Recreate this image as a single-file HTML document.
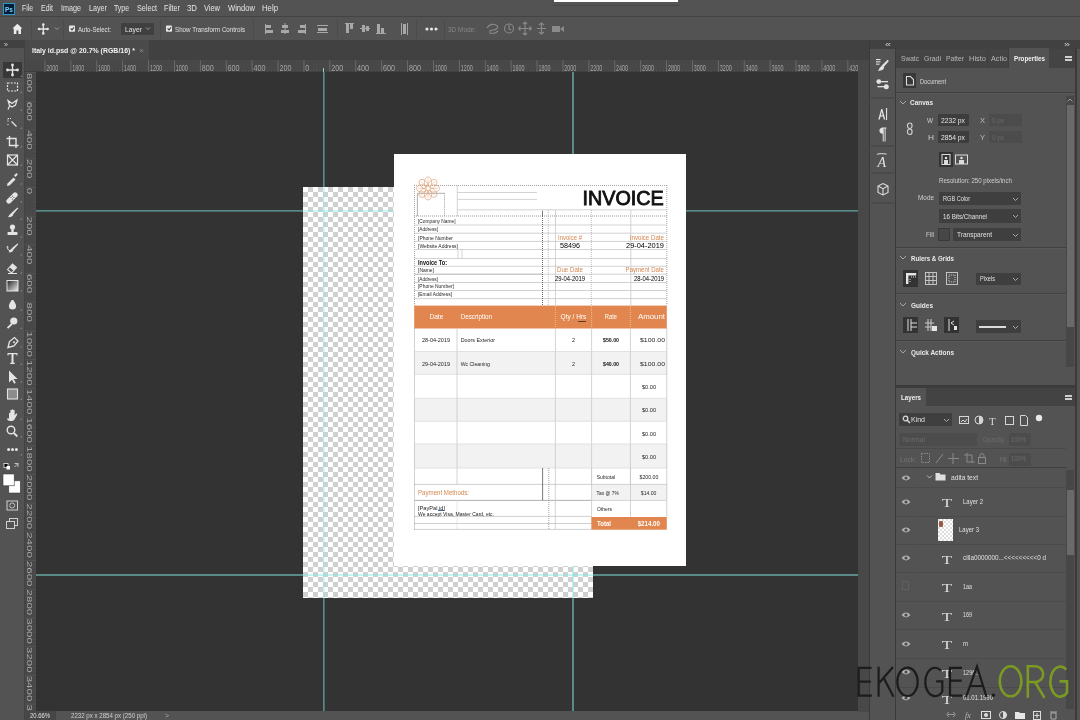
<!DOCTYPE html>
<html><head><meta charset="utf-8">
<style>
*{margin:0;padding:0;box-sizing:border-box}
html,body{width:1080px;height:720px;overflow:hidden;background:#535353;font-family:"Liberation Sans",sans-serif;color:#e6e6e6}
.a{position:absolute}
.t{position:absolute;white-space:nowrap;line-height:1;will-change:transform}
svg{will-change:transform}
</style></head><body>
<div class="a" style="left:0px;top:0px;width:1080px;height:16px;background:#535353;"></div>
<div class="a" style="left:0px;top:16px;width:1080px;height:1px;background:#444444;"></div>
<div class="a" style="left:0px;top:17px;width:1080px;height:23px;background:#535353;"></div>
<div class="a" style="left:3px;top:3px;width:12px;height:12px;background:#001e36;border:1px solid #2a9bd0"></div>
<div class="a" style="left:554px;top:0px;width:124px;height:1.5px;background:#ffffff;"></div>
<div class="a" style="left:553px;top:5px;width:127px;height:1px;background:#484848;"></div>
<div class="a" style="left:0px;top:40px;width:25px;height:8px;background:#414141;"></div>
<div class="a" style="left:0px;top:48px;width:25px;height:672px;background:#535353;"></div>
<div class="a" style="left:25px;top:40px;width:845px;height:20px;background:#414141;"></div>
<div class="a" style="left:25px;top:40px;width:124px;height:20px;background:#4a4a4a;"></div>
<div class="a" style="left:25px;top:60px;width:845px;height:12px;background:#484848;"></div>
<div class="a" style="left:25px;top:60px;width:11px;height:652px;background:#484848;"></div>
<div class="a" style="left:36px;top:72px;width:822px;height:639px;background:#333333;"></div>
<div class="a" style="left:25px;top:711px;width:845px;height:9px;background:#535353;"></div>
<div class="a" style="left:858px;top:72px;width:11px;height:640px;background:#484848;"></div>
<div class="a" style="left:869px;top:40px;width:1px;height:680px;background:#3a3a3a;"></div>
<div class="a" style="left:870px;top:40px;width:210px;height:9px;background:#414141;"></div>
<div class="a" style="left:895px;top:48px;width:1px;height:672px;background:#3a3a3a;"></div>
<div class="a" style="left:303px;top:187px;width:290px;height:411px;background:#ffffff;background-image:conic-gradient(#d0d0d0 25%,#ffffff 0 50%,#d0d0d0 0 75%,#ffffff 0);background-size:10px 10px;background-position:0 0"></div>
<div class="a" style="left:36px;top:210px;width:822px;height:1px;background:rgba(135,235,225,0.48);"></div>
<div class="a" style="left:36px;top:211px;width:822px;height:1px;background:rgba(120,245,240,0.3);"></div>
<div class="a" style="left:36px;top:574px;width:822px;height:2px;background:rgba(135,235,225,0.48);"></div>
<div class="a" style="left:323px;top:72px;width:1px;height:639px;background:rgba(135,235,225,0.48);"></div>
<div class="a" style="left:324px;top:72px;width:1px;height:639px;background:rgba(120,245,240,0.3);"></div>
<div class="a" style="left:572px;top:72px;width:2px;height:639px;background:rgba(135,235,225,0.48);"></div>
<div class="a" style="left:394px;top:154px;width:292px;height:412px;background:#ffffff;"></div>
<svg class="a" style="left:0;top:0" width="1080" height="720" viewBox="0 0 1080 720"><rect x="414.5" y="351.5" width="252.3" height="22.899999999999977" fill="#f2f2f2"/><rect x="414.5" y="398.3" width="252.3" height="22.94999999999999" fill="#f2f2f2"/><rect x="414.5" y="444" width="252.3" height="24" fill="#f2f2f2"/><rect x="591.6" y="484.4" width="75.2" height="16" fill="#f2f2f2"/><rect x="414.2" y="305.6" width="252.6" height="22.9" fill="#e1864f"/><rect x="591.3" y="517" width="75.5" height="12.7" fill="#e1864f"/><line x1="414" y1="185.5" x2="667" y2="185.5" stroke="#8c8c8c" stroke-width="0.8" stroke-dasharray="1 1"/><line x1="414.5" y1="185" x2="414.5" y2="305.6" stroke="#8c8c8c" stroke-width="0.8" stroke-dasharray="1 1"/><line x1="666.8" y1="185" x2="666.8" y2="305.6" stroke="#8c8c8c" stroke-width="0.8" stroke-dasharray="1 1"/><line x1="417.4" y1="193.3" x2="444.5" y2="193.3" stroke="#9a9a9a" stroke-width="0.8"/><line x1="417.4" y1="193.3" x2="417.4" y2="216" stroke="#9a9a9a" stroke-width="0.8"/><line x1="444.5" y1="193.3" x2="444.5" y2="216" stroke="#8c8c8c" stroke-width="0.8" stroke-dasharray="1 1"/><line x1="457.3" y1="185.5" x2="457.3" y2="216" stroke="#c8c8c8" stroke-width="0.8"/><line x1="457.3" y1="192.5" x2="537" y2="192.5" stroke="#c8c8c8" stroke-width="0.8"/><line x1="457.3" y1="199.4" x2="537" y2="199.4" stroke="#c8c8c8" stroke-width="0.8"/><line x1="457.3" y1="209.8" x2="667" y2="209.8" stroke="#c8c8c8" stroke-width="0.8"/><line x1="414" y1="216" x2="667" y2="216" stroke="#8c8c8c" stroke-width="0.9" stroke-dasharray="1 1"/><line x1="414.5" y1="225" x2="542.5" y2="225" stroke="#c8c8c8" stroke-width="0.8"/><line x1="414.5" y1="233.2" x2="542.5" y2="233.2" stroke="#8c8c8c" stroke-width="0.8" stroke-dasharray="1 1"/><line x1="414.5" y1="241.4" x2="542.5" y2="241.4" stroke="#8c8c8c" stroke-width="0.8" stroke-dasharray="1 1"/><line x1="414.5" y1="249.5" x2="542.5" y2="249.5" stroke="#c8c8c8" stroke-width="0.8"/><line x1="414.5" y1="258.5" x2="542.5" y2="258.5" stroke="#c8c8c8" stroke-width="0.8"/><line x1="414.5" y1="266.3" x2="542.5" y2="266.3" stroke="#c8c8c8" stroke-width="0.8"/><line x1="414.5" y1="274.2" x2="542.5" y2="274.2" stroke="#9a9a9a" stroke-width="0.8"/><line x1="414.5" y1="282.5" x2="542.5" y2="282.5" stroke="#8c8c8c" stroke-width="0.8" stroke-dasharray="1 1"/><line x1="414.5" y1="290.5" x2="542.5" y2="290.5" stroke="#8c8c8c" stroke-width="0.8" stroke-dasharray="1 1"/><line x1="414.5" y1="298.6" x2="542.5" y2="298.6" stroke="#8c8c8c" stroke-width="0.8" stroke-dasharray="1 1"/><line x1="542.5" y1="225" x2="666.8" y2="225" stroke="#c8c8c8" stroke-width="0.8"/><line x1="542.5" y1="233.2" x2="666.8" y2="233.2" stroke="#c8c8c8" stroke-width="0.8"/><line x1="542.5" y1="241.4" x2="666.8" y2="241.4" stroke="#8c8c8c" stroke-width="0.8" stroke-dasharray="1 1"/><line x1="542.5" y1="249.5" x2="666.8" y2="249.5" stroke="#c8c8c8" stroke-width="0.8"/><line x1="542.5" y1="258.5" x2="666.8" y2="258.5" stroke="#c8c8c8" stroke-width="0.8"/><line x1="542.5" y1="266.3" x2="666.8" y2="266.3" stroke="#c8c8c8" stroke-width="0.8"/><line x1="542.5" y1="274.2" x2="666.8" y2="274.2" stroke="#8c8c8c" stroke-width="0.8" stroke-dasharray="1 1"/><line x1="542.5" y1="282.5" x2="666.8" y2="282.5" stroke="#8c8c8c" stroke-width="0.8" stroke-dasharray="1 1"/><line x1="542.5" y1="290.5" x2="666.8" y2="290.5" stroke="#8c8c8c" stroke-width="0.8" stroke-dasharray="1 1"/><line x1="542.5" y1="298.6" x2="666.8" y2="298.6" stroke="#8c8c8c" stroke-width="0.8" stroke-dasharray="1 1"/><line x1="542.5" y1="210.7" x2="542.5" y2="216" stroke="#6a6a6a" stroke-width="0.9"/><line x1="542.5" y1="216" x2="542.5" y2="305.6" stroke="#6a6a6a" stroke-width="1" stroke-dasharray="1 1"/><line x1="548.3" y1="210" x2="548.3" y2="305.6" stroke="#b0b0b0" stroke-width="0.8" stroke-dasharray="1 1"/><line x1="555.5" y1="210" x2="555.5" y2="305.6" stroke="#c8c8c8" stroke-width="0.8"/><line x1="591.3" y1="210" x2="591.3" y2="305.6" stroke="#a8a8a8" stroke-width="0.8" stroke-dasharray="1 1"/><line x1="630.8" y1="210" x2="630.8" y2="305.6" stroke="#c8c8c8" stroke-width="0.8"/><line x1="458" y1="249.5" x2="458" y2="258.5" stroke="#c8c8c8" stroke-width="0.8"/><line x1="462" y1="249.5" x2="462" y2="258.5" stroke="#c8c8c8" stroke-width="0.8"/><line x1="555.4" y1="306" x2="555.4" y2="328" stroke="#f4c8a8" stroke-width="0.8" stroke-dasharray="1 1"/><line x1="591.6" y1="306" x2="591.6" y2="328" stroke="#f4c8a8" stroke-width="0.8" stroke-dasharray="1 1"/><line x1="630.4" y1="306" x2="630.4" y2="328" stroke="#f4c8a8" stroke-width="0.8" stroke-dasharray="1 1"/><line x1="457" y1="328.5" x2="457" y2="484.4" stroke="#c8c8c8" stroke-width="0.8"/><line x1="555.4" y1="328.5" x2="555.4" y2="484.4" stroke="#c8c8c8" stroke-width="0.8"/><line x1="591.6" y1="328.5" x2="591.6" y2="484.4" stroke="#c8c8c8" stroke-width="0.8"/><line x1="630.4" y1="328.5" x2="630.4" y2="484.4" stroke="#c8c8c8" stroke-width="0.8"/><line x1="414.5" y1="328.5" x2="414.5" y2="529.4" stroke="#8c8c8c" stroke-width="0.8" stroke-dasharray="1 1"/><line x1="666.8" y1="328.5" x2="666.8" y2="517" stroke="#8c8c8c" stroke-width="0.8" stroke-dasharray="1 1"/><line x1="414.5" y1="351.5" x2="666.8" y2="351.5" stroke="#dcdcdc" stroke-width="0.8"/><line x1="414.5" y1="374.4" x2="666.8" y2="374.4" stroke="#dcdcdc" stroke-width="0.8"/><line x1="414.5" y1="398.3" x2="666.8" y2="398.3" stroke="#dcdcdc" stroke-width="0.8"/><line x1="414.5" y1="421.25" x2="666.8" y2="421.25" stroke="#dcdcdc" stroke-width="0.8"/><line x1="414.5" y1="444" x2="666.8" y2="444" stroke="#dcdcdc" stroke-width="0.8"/><line x1="414.5" y1="468" x2="666.8" y2="468" stroke="#dcdcdc" stroke-width="0.8"/><line x1="414.5" y1="484.4" x2="591.6" y2="484.4" stroke="#8c8c8c" stroke-width="0.8" stroke-dasharray="1 1"/><line x1="591.6" y1="484.4" x2="666.8" y2="484.4" stroke="#c8c8c8" stroke-width="0.8"/><line x1="414.5" y1="500.4" x2="591.6" y2="500.4" stroke="#9a9a9a" stroke-width="0.8"/><line x1="591.6" y1="500.4" x2="666.8" y2="500.4" stroke="#c8c8c8" stroke-width="0.8"/><line x1="414.5" y1="516.4" x2="591.3" y2="516.4" stroke="#8c8c8c" stroke-width="0.8" stroke-dasharray="1 1"/><line x1="414.5" y1="523.5" x2="591.3" y2="523.5" stroke="#8c8c8c" stroke-width="0.8" stroke-dasharray="1 1"/><line x1="414.5" y1="529.4" x2="591.3" y2="529.4" stroke="#8c8c8c" stroke-width="0.8" stroke-dasharray="1 1"/><line x1="542.6" y1="468" x2="542.6" y2="500.4" stroke="#6a6a6a" stroke-width="0.9"/><line x1="548.8" y1="468" x2="548.8" y2="529.4" stroke="#8c8c8c" stroke-width="0.8" stroke-dasharray="1 1"/><line x1="555.3" y1="484.4" x2="555.3" y2="529.4" stroke="#c8c8c8" stroke-width="0.8"/><line x1="457" y1="500.4" x2="457" y2="529.4" stroke="#c8c8c8" stroke-width="0.8" stroke-dasharray="1 1"/><line x1="591.6" y1="468" x2="591.6" y2="517" stroke="#c8c8c8" stroke-width="0.8"/><line x1="630.5" y1="468" x2="630.5" y2="517" stroke="#c8c8c8" stroke-width="0.8"/><g transform="rotate(0 428 188.4)"><ellipse cx="428" cy="182.4" rx="3.6" ry="5.6" fill="none" stroke="#e0a882" stroke-width="0.7"/><ellipse cx="428" cy="194.4" rx="3.6" ry="5.6" fill="none" stroke="#e0a882" stroke-width="0.8"/><line x1="428" y1="178.4" x2="428" y2="198.4" stroke="#e0a882" stroke-width="0.5"/></g><g transform="rotate(45 428 188.4)"><ellipse cx="428" cy="182.4" rx="3.6" ry="5.6" fill="none" stroke="#e0a882" stroke-width="0.7"/><ellipse cx="428" cy="194.4" rx="3.6" ry="5.6" fill="none" stroke="#e0a882" stroke-width="0.8"/><line x1="428" y1="178.4" x2="428" y2="198.4" stroke="#e0a882" stroke-width="0.5"/></g><g transform="rotate(90 428 188.4)"><ellipse cx="428" cy="182.4" rx="3.6" ry="5.6" fill="none" stroke="#e0a882" stroke-width="0.7"/><ellipse cx="428" cy="194.4" rx="3.6" ry="5.6" fill="none" stroke="#e0a882" stroke-width="0.8"/><line x1="428" y1="178.4" x2="428" y2="198.4" stroke="#e0a882" stroke-width="0.5"/></g><g transform="rotate(135 428 188.4)"><ellipse cx="428" cy="182.4" rx="3.6" ry="5.6" fill="none" stroke="#e0a882" stroke-width="0.7"/><ellipse cx="428" cy="194.4" rx="3.6" ry="5.6" fill="none" stroke="#e0a882" stroke-width="0.8"/><line x1="428" y1="178.4" x2="428" y2="198.4" stroke="#e0a882" stroke-width="0.5"/></g><circle cx="428" cy="188.4" r="2.3" fill="#fff" stroke="#e0a882" stroke-width="0.8"/></svg>
<div class="a" style="left:438px;top:510px;width:6px;height:1px;background:#4060a0;"></div>
<div class="a" style="left:578px;top:320.5px;width:8px;height:1px;background:#5a3a2a;"></div>
<!-- icon column -->
<div class="a" style="left:870px;top:49px;width:25px;height:671px;background:#535353"></div>
<div class="a" style="left:871px;top:97px;width:23px;height:2px;background:#4a4a4a"></div>
<div class="a" style="left:871px;top:145px;width:23px;height:2px;background:#4a4a4a"></div>
<div class="a" style="left:871px;top:172px;width:23px;height:2px;background:#4a4a4a"></div>
<div class="a" style="left:871px;top:202px;width:23px;height:2px;background:#4a4a4a"></div>
<svg class="a" style="left:870px;top:49px" width="25" height="155" viewBox="870 49 25 155">
 <g fill="#e2e2e2">
  <rect x="876" y="59" width="4.5" height="1.1"/><rect x="876" y="61.3" width="4.5" height="1.1"/><rect x="876" y="63.6" width="3.5" height="1.1"/>
  <path d="M887.6 59.8l1.3 1.3-5.4 6.2-1.8-1.8z"/>
  <path d="M881.2 66.3c1.2-1.2 2.9-.4 2.9 1 0 2.4-3 3.7-6 3.6 1-1 .9-3 3.1-4.6z"/>
  <circle cx="878.8" cy="81.6" r="2.4"/><rect x="881" y="81" width="7" height="1.3"/>
  <rect x="877.5" y="86" width="6.5" height="1.3"/><circle cx="886.3" cy="86.7" r="2.5"/>
  <path d="M878.3 119.5l2.9-10.5h1.2l2.9 10.5h-1.5l-.8-3h-2.4l-.8 3zm2.6-4.3h1.8l-.9-3.6z"/>
  <rect x="886" y="108" width="1.1" height="12"/>
  <path d="M882.3 127.5h4.2v1.1h-.9v12.8h-1v-12.8h-.9v12.8h-1v-7.6c-1.9 0-3.3-1.3-3.3-3.1s1.4-3.2 3.3-3.2z"/>
  <text x="877.5" y="166.5" font-family="Liberation Serif" font-style="italic" font-size="14" fill="#e2e2e2">A</text><path d="M877 154.3c2-.8 6-.8 9.5-.2" stroke="#e2e2e2" stroke-width="1" fill="none"/>
 </g>
 <g fill="none" stroke="#dcdcdc" stroke-width="1.1">
  <path d="M883 183.5l5 2.6v6.3l-5 2.6-5-2.6v-6.3z M878 186.1l5 2.6 5-2.6 M883 188.7v6.3"/>
 </g>
</svg>

<div class="a" style="left:896px;top:49px;width:179px;height:19px;background:#444444;"></div>
<div class="a" style="left:1009px;top:48px;width:40px;height:21px;background:#535353;"></div>
<div class="a" style="left:987px;top:50px;width:1px;height:17px;background:#3e3e3e;"></div>
<div class="a" style="left:1008px;top:48px;width:1px;height:20px;background:#3e3e3e;"></div>
<div class="a" style="left:1065px;top:56px;width:7px;height:2px;background:#cfcfcf;"></div>
<div class="a" style="left:1065px;top:59px;width:7px;height:2px;background:#cfcfcf;"></div>
<div class="a" style="left:1075px;top:48px;width:2px;height:672px;background:#3a3a3a;"></div>
<div class="a" style="left:903px;top:73px;width:13px;height:15px;background:#383838;"></div>
<svg class="a" style="left:905px;top:75px" width="10" height="11"><path d="M1.5 1.5h4l3 3v5.5h-7z" fill="none" stroke="#dcdcdc" stroke-width="1.1"/></svg>
<div class="a" style="left:896px;top:92px;width:179px;height:1px;background:#404040;"></div>
<div class="a" style="left:896px;top:93px;width:179px;height:1px;background:#5a5a5a;"></div>
<div class="a" style="left:1066px;top:96px;width:8px;height:271px;background:#474747;"></div>
<div class="a" style="left:1067px;top:105px;width:7px;height:222px;background:#6a6a6a;"></div>
<svg class="a" style="left:1066px;top:97px" width="8" height="6"><path d="M1.5 4.5l2.5-2.5 2.5 2.5" fill="none" stroke="#999" stroke-width="1"/></svg>
<svg class="a" style="left:899px;top:99px" width="8" height="7"><path d="M1 2l3 3 3-3" fill="none" stroke="#a8a8a8" stroke-width="1"/></svg>
<div class="a" style="left:938px;top:114px;width:31px;height:12px;background:#3d3d3d;"></div>
<div class="a" style="left:989px;top:114px;width:33px;height:12px;background:#4c4c4c;"></div>
<div class="a" style="left:938px;top:131px;width:31px;height:12px;background:#3d3d3d;"></div>
<div class="a" style="left:989px;top:131px;width:33px;height:12px;background:#4c4c4c;"></div>
<svg class="a" style="left:906px;top:122px" width="8" height="14"><g fill="none" stroke="#cfcfcf" stroke-width="1.2"><rect x="1.5" y="1" width="4.5" height="5.5" rx="2.2"/><rect x="1.5" y="7" width="4.5" height="5.5" rx="2.2"/></g></svg>
<div class="a" style="left:939px;top:152px;width:14px;height:15px;background:#333333;"></div>
<svg class="a" style="left:941px;top:154px" width="10" height="11"><rect x="1" y="0.5" width="8" height="10" fill="none" stroke="#ddd"/><circle cx="5" cy="4" r="1.3" fill="#ddd"/><rect x="3" y="6" width="4" height="4" fill="#ddd"/></svg>
<svg class="a" style="left:955px;top:154px" width="13" height="11"><rect x="0.5" y="1" width="12" height="9" fill="none" stroke="#ddd"/><circle cx="6.5" cy="4" r="1.3" fill="#ddd"/><rect x="4" y="6" width="5" height="4" fill="#ddd"/></svg>
<div class="a" style="left:939px;top:192px;width:82px;height:13px;background:#3f3f3f;"></div>
<div class="a" style="left:939px;top:209px;width:82px;height:14px;background:#3f3f3f;"></div>
<div class="a" style="left:938px;top:228px;width:12px;height:13px;background:#474747;border:1px solid #3a3a3a"></div>
<div class="a" style="left:953px;top:228px;width:68px;height:13px;background:#3f3f3f;"></div>
<svg class="a" style="left:1012px;top:196px" width="7" height="6"><path d="M1 2l2.5 2.5 2.5-2.5" fill="none" stroke="#a8a8a8" stroke-width="1"/></svg>
<svg class="a" style="left:1012px;top:213px" width="7" height="6"><path d="M1 2l2.5 2.5 2.5-2.5" fill="none" stroke="#a8a8a8" stroke-width="1"/></svg>
<svg class="a" style="left:1012px;top:232px" width="7" height="6"><path d="M1 2l2.5 2.5 2.5-2.5" fill="none" stroke="#a8a8a8" stroke-width="1"/></svg>
<div class="a" style="left:896px;top:247px;width:170px;height:1px;background:#404040;"></div>
<div class="a" style="left:896px;top:248px;width:170px;height:1px;background:#5a5a5a;"></div>
<svg class="a" style="left:899px;top:254px" width="8" height="7"><path d="M1 2l3 3 3-3" fill="none" stroke="#a8a8a8" stroke-width="1"/></svg>
<div class="a" style="left:903px;top:270px;width:15px;height:17px;background:#333333;"></div>
<svg class="a" style="left:905px;top:272px" width="12" height="13"><path d="M2.2 12V2.2h9" fill="none" stroke="#e6e6e6" stroke-width="2.4"/><path d="M6 5h1M8 5h1M10 5h1M5 7v1M5 9v1" stroke="#d0d0d0"/></svg>
<svg class="a" style="left:925px;top:272px" width="12" height="13"><g fill="none" stroke="#cfcfcf" stroke-width="0.9"><rect x="0.5" y="0.5" width="11" height="12"/><path d="M4 0.5v12M8 0.5v12M0.5 4.5h11M0.5 8.5h11"/></g></svg>
<svg class="a" style="left:946px;top:272px" width="12" height="13"><g fill="none" stroke="#cfcfcf" stroke-width="0.9"><rect x="0.5" y="0.5" width="11" height="12"/><rect x="3" y="3" width="6" height="7" stroke-dasharray="1 1"/></g></svg>
<div class="a" style="left:976px;top:273px;width:45px;height:12px;background:#3f3f3f;"></div>
<svg class="a" style="left:1012px;top:276px" width="7" height="6"><path d="M1 2l2.5 2.5 2.5-2.5" fill="none" stroke="#a8a8a8" stroke-width="1"/></svg>
<div class="a" style="left:896px;top:293px;width:170px;height:1px;background:#404040;"></div>
<div class="a" style="left:896px;top:294px;width:170px;height:1px;background:#5a5a5a;"></div>
<svg class="a" style="left:899px;top:301px" width="8" height="7"><path d="M1 2l3 3 3-3" fill="none" stroke="#a8a8a8" stroke-width="1"/></svg>
<div class="a" style="left:903px;top:317px;width:15px;height:16px;background:#333333;"></div>
<svg class="a" style="left:905px;top:319px" width="12" height="12"><g stroke="#e0e0e0" stroke-width="1"><path d="M3 0v12M6 0v12M6 4h6M6 8h6"/></g></svg>
<svg class="a" style="left:925px;top:319px" width="13" height="12"><g stroke="#cfcfcf" stroke-width="1"><path d="M3 0v12M6 0v12M0 4h9M0 8h6"/></g><rect x="7" y="7" width="5" height="5" fill="#e6e6e6"/></svg>
<div class="a" style="left:944px;top:317px;width:15px;height:16px;background:#333333;"></div>
<svg class="a" style="left:946px;top:319px" width="12" height="12"><g stroke="#e0e0e0" stroke-width="1" fill="none"><path d="M3 0v12M5 4l3-2M5 4l3 2"/></g><rect x="8" y="7" width="3" height="4" fill="#e6e6e6"/></svg>
<div class="a" style="left:976px;top:320px;width:45px;height:13px;background:#3f3f3f;"></div>
<div class="a" style="left:979px;top:326px;width:27px;height:1.5px;background:#dadada;"></div>
<svg class="a" style="left:1012px;top:324px" width="7" height="6"><path d="M1 2l2.5 2.5 2.5-2.5" fill="none" stroke="#a8a8a8" stroke-width="1"/></svg>
<div class="a" style="left:896px;top:340px;width:170px;height:1px;background:#404040;"></div>
<div class="a" style="left:896px;top:341px;width:170px;height:1px;background:#5a5a5a;"></div>
<svg class="a" style="left:899px;top:348px" width="8" height="7"><path d="M1 2l3 3 3-3" fill="none" stroke="#a8a8a8" stroke-width="1"/></svg>
<div class="a" style="left:896px;top:385px;width:179px;height:3px;background:#3c3c3c;"></div>
<div class="a" style="left:896px;top:388px;width:179px;height:18px;background:#434343;"></div>
<div class="a" style="left:896px;top:388px;width:30px;height:19px;background:#535353;"></div>
<div class="a" style="left:1065px;top:395px;width:7px;height:2px;background:#cfcfcf;"></div>
<div class="a" style="left:1065px;top:398px;width:7px;height:2px;background:#cfcfcf;"></div>
<div class="a" style="left:899px;top:413px;width:53px;height:13px;background:#3f3f3f;"></div>
<svg class="a" style="left:902px;top:415px" width="9" height="9"><circle cx="3.5" cy="3.5" r="2.3" fill="none" stroke="#ddd" stroke-width="1.2"/><path d="M5 5l3 3" stroke="#ddd" stroke-width="1.4"/></svg>
<svg class="a" style="left:943px;top:417px" width="7" height="6"><path d="M1 2l2.5 2.5 2.5-2.5" fill="none" stroke="#a8a8a8" stroke-width="1"/></svg>
<svg class="a" style="left:958px;top:413px" width="86" height="14">
 <g fill="none" stroke="#d6d6d6" stroke-width="1">
  <rect x="1.5" y="3.5" width="9" height="7"/>
  <circle cx="21" cy="7" r="4"/>
  <rect x="47.5" y="3.5" width="8" height="8"/>
  <path d="M62.5 2.5h5l2 2v8h-7z"/>
 </g>
 <path d="M3 9l2-2 2 2 2-3" stroke="#d6d6d6" fill="none"/>
 <path d="M21 3a4 4 0 0 1 0 8z" fill="#d6d6d6"/>
 <text x="31" y="12" font-family="Liberation Serif" font-size="11" fill="#d6d6d6">T</text>
 <circle cx="81" cy="5" r="3.2" fill="#e8e8e8"/>
</svg>
<div class="a" style="left:899px;top:433px;width:78px;height:13px;background:#4c4c4c;"></div>
<div class="a" style="left:1009px;top:433px;width:22px;height:13px;background:#4c4c4c;"></div>
<div class="a" style="left:896px;top:448px;width:170px;height:1px;background:#4a4a4a;"></div>
<svg class="a" style="left:920px;top:452px" width="70" height="13"><g fill="none" stroke="#8a8a8a" stroke-width="1"><rect x="1.5" y="1.5" width="8" height="9" stroke-dasharray="1.5 1"/><path d="M16 11l7-9"/><path d="M33 1v11M28 6.5h11"/><path d="M44 3h8v8M47 1v9h8"/><rect x="58.5" y="5.5" width="7" height="6"/><path d="M60 5.5v-2a2 2 0 0 1 4 0v2"/></g></svg>
<div class="a" style="left:1009px;top:453px;width:22px;height:13px;background:#4c4c4c;"></div>
<div class="a" style="left:896px;top:467px;width:170px;height:1px;background:#404040;"></div>
<div class="a" style="left:914px;top:468px;width:1px;height:241px;background:#515151;"></div>
<div class="a" style="left:1066px;top:470px;width:8px;height:239px;background:#474747;"></div>
<div class="a" style="left:1067px;top:490px;width:7px;height:65px;background:#6a6a6a;"></div>
<div class="a" style="left:896px;top:487px;width:170px;height:1px;background:#4b4b4b;"></div>
<svg class="a" style="left:901px;top:474px" width="10" height="8"><path d="M0.5 4Q5 -0.8 9.5 4Q5 8.8 0.5 4z" fill="#b4b4b4"/><circle cx="5" cy="4" r="1.6" fill="#4c4c4c"/></svg>
<svg class="a" style="left:926px;top:474px" width="7" height="6"><path d="M1 1.5l2.5 2.5 2.5-2.5" fill="none" stroke="#bbb"/></svg>
<svg class="a" style="left:935px;top:472px" width="11" height="9"><path d="M0.5 1h4l1 1.5h5v6h-10z" fill="#e0e0e0"/></svg>
<div class="a" style="left:896px;top:516px;width:170px;height:1px;background:#4b4b4b;"></div>
<svg class="a" style="left:901px;top:498px" width="10" height="8"><path d="M0.5 4Q5 -0.8 9.5 4Q5 8.8 0.5 4z" fill="#b4b4b4"/><circle cx="5" cy="4" r="1.6" fill="#4c4c4c"/></svg>
<div class="a" style="left:896px;top:544px;width:170px;height:1px;background:#4b4b4b;"></div>
<svg class="a" style="left:901px;top:526px" width="10" height="8"><path d="M0.5 4Q5 -0.8 9.5 4Q5 8.8 0.5 4z" fill="#b4b4b4"/><circle cx="5" cy="4" r="1.6" fill="#4c4c4c"/></svg>
<div class="a" style="left:938px;top:519px;width:15px;height:22px;background:#ffffff;background-image:linear-gradient(45deg,#ddd 25%,transparent 25%,transparent 75%,#ddd 75%),linear-gradient(45deg,#ddd 25%,transparent 25%,transparent 75%,#ddd 75%);background-size:4px 4px;background-position:2px 0,0 2px"></div>
<div class="a" style="left:939px;top:521px;width:4px;height:6px;background:#9a5a48;border-radius:1px"></div>
<div class="a" style="left:896px;top:572px;width:170px;height:1px;background:#4b4b4b;"></div>
<svg class="a" style="left:901px;top:554px" width="10" height="8"><path d="M0.5 4Q5 -0.8 9.5 4Q5 8.8 0.5 4z" fill="#b4b4b4"/><circle cx="5" cy="4" r="1.6" fill="#4c4c4c"/></svg>
<div class="a" style="left:896px;top:601px;width:170px;height:1px;background:#4b4b4b;"></div>
<div class="a" style="left:902px;top:581px;width:7px;height:9px;background:transparent;border:1px solid #606060"></div>
<div class="a" style="left:896px;top:629px;width:170px;height:1px;background:#4b4b4b;"></div>
<svg class="a" style="left:901px;top:611px" width="10" height="8"><path d="M0.5 4Q5 -0.8 9.5 4Q5 8.8 0.5 4z" fill="#b4b4b4"/><circle cx="5" cy="4" r="1.6" fill="#4c4c4c"/></svg>
<div class="a" style="left:896px;top:658px;width:170px;height:1px;background:#4b4b4b;"></div>
<svg class="a" style="left:901px;top:640px" width="10" height="8"><path d="M0.5 4Q5 -0.8 9.5 4Q5 8.8 0.5 4z" fill="#b4b4b4"/><circle cx="5" cy="4" r="1.6" fill="#4c4c4c"/></svg>
<div class="a" style="left:896px;top:687px;width:170px;height:1px;background:#4b4b4b;"></div>
<svg class="a" style="left:901px;top:668px" width="10" height="8"><path d="M0.5 4Q5 -0.8 9.5 4Q5 8.8 0.5 4z" fill="#b4b4b4"/><circle cx="5" cy="4" r="1.6" fill="#4c4c4c"/></svg>
<div class="a" style="left:896px;top:709px;width:170px;height:1px;background:#4b4b4b;"></div>
<svg class="a" style="left:901px;top:694px" width="10" height="8"><path d="M0.5 4Q5 -0.8 9.5 4Q5 8.8 0.5 4z" fill="#b4b4b4"/><circle cx="5" cy="4" r="1.6" fill="#4c4c4c"/></svg>
<div class="a" style="left:896px;top:709px;width:179px;height:11px;background:#535353;"></div>
<svg class="a" style="left:945px;top:709px" width="115" height="11">
 <g fill="none" stroke="#9a9a9a" stroke-width="1">
  <path d="M3 5.5h6M4 3.5a2 2 0 0 0 0 4M8 3.5a2 2 0 0 1 0 4"/>
 </g>
 <text x="20" y="9" font-family="Liberation Serif" font-style="italic" font-size="8" fill="#bbb">fx</text>
 <rect x="36.5" y="2.5" width="9" height="7" fill="none" stroke="#ddd"/><circle cx="41" cy="6" r="2" fill="#ddd"/>
 <circle cx="58" cy="6" r="3.5" fill="none" stroke="#ddd"/><path d="M58 2.5a3.5 3.5 0 0 1 0 7z" fill="#ddd"/>
 <path d="M70 3h4l1 1h5v6h-10z" fill="#e6e6e6"/>
 <rect x="88.5" y="2.5" width="7" height="8" fill="none" stroke="#ddd"/><path d="M92 4v5M89.5 6.5h5" stroke="#ddd"/>
 <path d="M105 3h7M106 4h5v6h-5z" fill="none" stroke="#aaa"/>
</svg>
<!-- options bar content -->
<svg class="a" style="left:0;top:17px" width="600" height="23" viewBox="0 0 600 23">
 <path d="M17.4 6.8l-5 4.6h1.4v5.6h2.6v-3.4h2v3.4h2.6v-5.6h1.4z" fill="#ececec"/>
 <rect x="31" y="2" width="1" height="19" fill="#4b4b4b"/>
 <g fill="#e6e6e6" stroke="#e6e6e6" stroke-width="1.3">
  <path d="M43.3 8v8M39.3 12h8" fill="none"/>
  <circle cx="43.3" cy="7.6" r="1.3" stroke="none"/><circle cx="43.3" cy="16.4" r="1.3" stroke="none"/><circle cx="39" cy="12" r="1.3" stroke="none"/><circle cx="47.6" cy="12" r="1.3" stroke="none"/>
 </g>
 <path d="M55 10.5l2 2 2-2" fill="none" stroke="#999" stroke-width="1"/>
 <rect x="63" y="2" width="1" height="19" fill="#4b4b4b"/>
 <rect x="69" y="8.4" width="6" height="6.3" rx="0.8" fill="#e6e6e6"/>
 <path d="M70.6 11.3l1.4 1.5 2-2.4" fill="none" stroke="#444" stroke-width="1.1"/>
 <rect x="121" y="6" width="33" height="12" fill="#404040"/>
 <path d="M146 10.5l2 2 2-2" fill="none" stroke="#999" stroke-width="1"/>
 <rect x="160" y="2" width="1" height="19" fill="#4b4b4b"/>
 <rect x="166" y="8.4" width="6" height="6.3" rx="0.8" fill="#e6e6e6"/>
 <path d="M167.6 11.3l1.4 1.5 2-2.4" fill="none" stroke="#444" stroke-width="1.1"/>
 <rect x="253" y="2" width="1" height="19" fill="#4b4b4b"/>
 <g fill="#a8a8a8">
  <!-- align left edges -->
  <rect x="265" y="7" width="1" height="10"/><rect x="266" y="8" width="5" height="3"/><rect x="266" y="13" width="7" height="3"/>
  <!-- align horiz centers -->
  <rect x="284.5" y="6" width="1" height="11"/><rect x="282" y="8" width="6" height="3"/><rect x="281" y="13" width="8" height="3"/>
  <!-- align right -->
  <rect x="305" y="7" width="1" height="10"/><rect x="300" y="8" width="5" height="3"/><rect x="298" y="13" width="7" height="3"/>
  <!-- distribute -->
  <rect x="317" y="8" width="11" height="1"/><rect x="318" y="11" width="9" height="3"/><rect x="317" y="15" width="11" height="1"/>
 </g>
 <rect x="337" y="2" width="1" height="19" fill="#4b4b4b"/>
 <g fill="#a8a8a8">
  <rect x="346" y="7" width="3" height="9"/><rect x="350" y="7" width="3" height="5"/><rect x="345" y="6" width="9" height="1"/>
  <rect x="360" y="11" width="10" height="1"/><rect x="362" y="8" width="3" height="7"/><rect x="366" y="9" width="3" height="5"/>
  <rect x="377" y="7" width="3" height="9"/><rect x="381" y="11" width="3" height="5"/><rect x="376" y="16" width="10" height="1"/>
  <rect x="401" y="6" width="1" height="12"/><rect x="403" y="7" width="3" height="10"/><rect x="407" y="6" width="1" height="12"/>
 </g>
 <rect x="416" y="2" width="1" height="19" fill="#4b4b4b"/>
 <circle cx="427" cy="12" r="1.6" fill="#e6e6e6"/><circle cx="431.5" cy="12" r="1.6" fill="#e6e6e6"/><circle cx="436" cy="12" r="1.6" fill="#e6e6e6"/>
 <rect x="444" y="2" width="1" height="19" fill="#4b4b4b"/>
 <g fill="none" stroke="#8a8a8a" stroke-width="1.1">
  <path d="M487 11c2-4 8-5 10-2c2 2-1 4-4 4c-2 0-4 1-3 3c3 1 6 0 8-2"/>
  <circle cx="509" cy="11.5" r="4.5"/><path d="M509 8v4l2 1"/>
  <path d="M525 5v13M518.5 11.5h13M525 5l-2 2M525 5l2 2M525 18l-2-2M525 18l2-2M518.5 11.5l2-2M518.5 11.5l2 2M531.5 11.5l-2-2M531.5 11.5l-2 2"/>
  <path d="M541.5 7v9M537 11.5h9M539 8l2.5-2 2.5 2M539 15l2.5 2 2.5-2"/>
 </g>
 <rect x="552" y="9" width="8" height="6" fill="#8a8a8a"/><path d="M560 12l4-3v6z" fill="#8a8a8a"/>
</svg>

<!-- toolbar -->
<div class="t" style="left:4px;top:41px;font-size:7px;color:#cfcfcf">»</div>
<div class="a" style="left:3px;top:62px;width:19px;height:16px;background:#383838"></div>
<div class="a" style="left:24px;top:48px;width:1px;height:672px;background:#434343"></div>
<svg class="a" style="left:0;top:48px" width="25" height="490" viewBox="0 48 25 490">
 <defs><linearGradient id="gr" x1="0" x2="1" y1="0" y2="1"><stop offset="0" stop-color="#222"/><stop offset="1" stop-color="#eee"/></linearGradient></defs>
 <g fill="none" stroke="#e4e4e4" stroke-width="1.2">
  <!-- move 70 -->
  <path d="M12.5 65.5v9M8 70h9" stroke-width="1.4"/>
  <!-- marquee 87 -->
  <rect x="7.5" y="83" width="10" height="8" stroke-dasharray="2 1.2"/>
  <!-- lasso 105 -->
  <path d="M8 100.5l4 3 5-3.5-1.5 5-3.5 2-2.5-1.5zM9.5 106l-1.5 3.5"/>
  <!-- quick sel 123 -->
  <path d="M8 118.5h3M8 118.5v3M8 124v1" stroke-dasharray="1 1"/>
  <path d="M11.5 121.5l5 5"/>
  <!-- crop 141.7 -->
  <path d="M9.5 136v9.5h9M6.5 138.5h9.5v9.5" stroke-width="1.4"/>
  <!-- frame 160 -->
  <rect x="7.5" y="155" width="10" height="10"/><path d="M7.5 155l10 10M17.5 155l-10 10"/>
  <!-- pen 341.7 -->
  <path d="M8 347.5l1.5-6 5-4 3.5 3.5-4 5z" stroke-width="1.3"/>
  <!-- zoom 431.7 -->
  <circle cx="11" cy="430" r="3.8" stroke-width="1.4"/><path d="M13.8 433l3.5 3.5" stroke-width="1.8"/>
  <!-- history arrow -->
  <path d="M7.5 247.5a3.5 3.5 0 0 0 4 3.5" stroke-width="1"/>
  <!-- eraser outline -->
  <path d="M7.5 269.5l5-5.5 4 3.5-5 5.5zM8 273.5h9" stroke-width="1.1"/>
 </g>
 <g fill="#e4e4e4">
  <circle cx="12.5" cy="65" r="1.4"/><circle cx="12.5" cy="75" r="1.4"/><circle cx="7.5" cy="70" r="1.4"/><circle cx="17.5" cy="70" r="1.4"/>
  <!-- eyedropper 178.5 -->
  <path d="M7.5 183.5l6-6 2 2-6 6-2.5.5z"/>
  <path d="M14 175.5l2-2c.8-.8 2.2.6 1.4 1.4l-2 2z"/>
  <!-- healing 196.6 -->
  <path d="M7 199.5l6.5-6.5c1-1 2.3-1 3.3 0l.2.2c1 1 1 2.3 0 3.3l-6.5 6.5c-1 1-2.3 1-3.3 0l-.2-.2c-1-1-1-2.3 0-3.3z"/>
  <!-- brush 214 -->
  <path d="M17.5 207.5l.8.8-5.3 6.2-1.6-1.6z"/>
  <path d="M11 213.5c1-1 2.3-.3 2.3.8 0 2-2.5 3-5.3 2.9.9-.8.8-2.5 3-3.7z"/>
  <!-- stamp 231.5 -->
  <circle cx="12.5" cy="227" r="2.6"/><rect x="11.3" y="228.5" width="2.4" height="3.5"/><rect x="7.5" y="232" width="10" height="3" rx="0.8"/>
  <!-- history 249.5 -->
  <path d="M17.5 243.5l.8.8-5 5.5-1.6-1.6z"/>
  <path d="M11.2 249c.9-.9 2.1-.2 2.1.7 0 1.8-2.3 2.7-4.8 2.6.8-.7.7-2.2 2.7-3.3z"/>
  <path d="M6.3 247.5l1.2-1.8 1.3 1.8z"/>
  <!-- eraser fill -->
  <path d="M12.5 264l4 3.5-3 3.3-4-3.5z"/>
  <!-- blur 305 -->
  <path d="M12.5 299c-2 3-3.6 5-3.6 7a3.6 3.6 0 0 0 7.2 0c0-2-1.6-4-3.6-7z"/>
  <!-- dodge 323.3 -->
  <circle cx="13.8" cy="321" r="3.6"/><path d="M11.2 323.2l1.3 1.3-4.3 4.3-1.3-1.3z"/>
  <circle cx="14" cy="342.3" r="1"/>
  <!-- type 359 -->
  <path d="M7.5 353h10v2.4h-1v-1.2h-3v8.6h1.3v1.2h-4.6v-1.2h1.3v-8.6h-3v1.2h-1z"/>
  <!-- path select 376.7 -->
  <path d="M9 370.5v12l3-2.8 2.2 4 1.6-.9-2.2-3.9h4z"/>
  <!-- hand 414 -->
  <path d="M9 418.5v-5c0-1 1.4-1 1.4 0v-3c0-1 1.4-1 1.4 0v-.6c0-1 1.4-1 1.4 0v.6c0-1 1.4-1 1.4 0v5l1-1.5c.8-1 2-.2 1.5.8l-2.5 4.5c-.5 1-1.3 1.7-2.5 1.7h-2.1c-1.5 0-3-1.2-3-2.5z"/>
  <circle cx="8.6" cy="449.5" r="1.5"/><circle cx="12.5" cy="449.5" r="1.5"/><circle cx="16.4" cy="449.5" r="1.5"/>
 </g>
 <!-- healing dots -->
 <g fill="#535353"><circle cx="11" cy="197.5" r="0.6"/><circle cx="12.5" cy="196" r="0.6"/><circle cx="14" cy="197.5" r="0.6"/><circle cx="12.5" cy="199" r="0.6"/></g>
 <!-- gradient 285.5 -->
 <rect x="7" y="280.5" width="11" height="10.5" fill="url(#gr)" stroke="#e4e4e4" stroke-width="1"/>
 <!-- rect tool 394 -->
 <rect x="7.5" y="389" width="10" height="10" fill="#8c8c8c" stroke="#e4e4e4" stroke-width="1.1"/>
 <!-- small corner triangles -->
 <g fill="#b0b0b0">
  <path d="M20.5 77l1-2v2z M20.5 93l1-2v2z M20.5 111l1-2v2z M20.5 129l1-2v2z M20.5 147.5l1-2v2z M20.5 166l1-2v2z M20.5 184.5l1-2v2z M20.5 202.5l1-2v2z M20.5 220l1-2v2z M20.5 237.5l1-2v2z M20.5 255.5l1-2v2z M20.5 273.5l1-2v2z M20.5 291.5l1-2v2z M20.5 311l1-2v2z M20.5 329l1-2v2z M20.5 347.5l1-2v2z M20.5 365l1-2v2z M20.5 382.5l1-2v2z M20.5 400l1-2v2z M20.5 420l1-2v2z M20.5 437.5l1-2v2z M20.5 455.5l1-2v2z"/>
 </g>
 <!-- small swatches 466.7 -->
 <rect x="4" y="463.5" width="4" height="4" fill="#000" stroke="#eee" stroke-width="0.8"/>
 <rect x="6.5" y="466" width="3.5" height="3.5" fill="#fff"/>
 <path d="M14.5 463.5h3.5v3.5M18 463.5l-3.5 3.5" stroke="#ccc" fill="none" stroke-width="0.9"/>
 <!-- fg/bg -->
 <rect x="8.8" y="480.8" width="11.5" height="12.2" fill="#fff" stroke="#3c3c3c" stroke-width="0.6"/>
 <rect x="3" y="474" width="11.2" height="11.8" fill="#fff" stroke="#3c3c3c" stroke-width="0.6"/>
 <!-- quick mask 505.5 -->
 <rect x="7" y="501" width="10.5" height="9" fill="none" stroke="#cfcfcf" stroke-width="1"/>
 <circle cx="12.2" cy="505.5" r="2.5" fill="none" stroke="#cfcfcf" stroke-width="0.9"/>
 <!-- screen mode 523 -->
 <rect x="9.5" y="518.5" width="8" height="7" fill="none" stroke="#cfcfcf"/>
 <rect x="6.5" y="521.5" width="8" height="7" fill="#535353" stroke="#cfcfcf"/>
</svg>

<svg class="a" style="left:0;top:60px" width="858" height="12" viewBox="0 60 858 12">
<rect x="25" y="71.3" width="845" height="0.8" fill="#393939"/>
<rect x="44.5" y="60.5" width="0.9" height="11.5" fill="#6e6e6e"/>
<rect x="47.7" y="70.0" width="0.6" height="2" fill="#555555"/>
<rect x="51.0" y="70.0" width="0.6" height="2" fill="#555555"/>
<rect x="54.2" y="70.0" width="0.6" height="2" fill="#555555"/>
<rect x="57.5" y="68.0" width="0.6" height="4" fill="#555555"/>
<rect x="60.7" y="70.0" width="0.6" height="2" fill="#555555"/>
<rect x="63.9" y="70.0" width="0.6" height="2" fill="#555555"/>
<rect x="67.2" y="70.0" width="0.6" height="2" fill="#555555"/>
<text x="46.3" y="70.8" font-family="Liberation Sans" font-size="8.3" fill="#a4a4a4" textLength="12" lengthAdjust="spacingAndGlyphs">2000</text>
<rect x="70.4" y="60.5" width="0.9" height="11.5" fill="#6e6e6e"/>
<rect x="73.6" y="70.0" width="0.6" height="2" fill="#555555"/>
<rect x="76.9" y="70.0" width="0.6" height="2" fill="#555555"/>
<rect x="80.1" y="70.0" width="0.6" height="2" fill="#555555"/>
<rect x="83.4" y="68.0" width="0.6" height="4" fill="#555555"/>
<rect x="86.6" y="70.0" width="0.6" height="2" fill="#555555"/>
<rect x="89.8" y="70.0" width="0.6" height="2" fill="#555555"/>
<rect x="93.1" y="70.0" width="0.6" height="2" fill="#555555"/>
<text x="72.2" y="70.8" font-family="Liberation Sans" font-size="8.3" fill="#a4a4a4" textLength="12" lengthAdjust="spacingAndGlyphs">1800</text>
<rect x="96.3" y="60.5" width="0.9" height="11.5" fill="#6e6e6e"/>
<rect x="99.5" y="70.0" width="0.6" height="2" fill="#555555"/>
<rect x="102.8" y="70.0" width="0.6" height="2" fill="#555555"/>
<rect x="106.0" y="70.0" width="0.6" height="2" fill="#555555"/>
<rect x="109.3" y="68.0" width="0.6" height="4" fill="#555555"/>
<rect x="112.5" y="70.0" width="0.6" height="2" fill="#555555"/>
<rect x="115.7" y="70.0" width="0.6" height="2" fill="#555555"/>
<rect x="119.0" y="70.0" width="0.6" height="2" fill="#555555"/>
<text x="98.1" y="70.8" font-family="Liberation Sans" font-size="8.3" fill="#a4a4a4" textLength="12" lengthAdjust="spacingAndGlyphs">1600</text>
<rect x="122.2" y="60.5" width="0.9" height="11.5" fill="#6e6e6e"/>
<rect x="125.4" y="70.0" width="0.6" height="2" fill="#555555"/>
<rect x="128.7" y="70.0" width="0.6" height="2" fill="#555555"/>
<rect x="131.9" y="70.0" width="0.6" height="2" fill="#555555"/>
<rect x="135.2" y="68.0" width="0.6" height="4" fill="#555555"/>
<rect x="138.4" y="70.0" width="0.6" height="2" fill="#555555"/>
<rect x="141.6" y="70.0" width="0.6" height="2" fill="#555555"/>
<rect x="144.9" y="70.0" width="0.6" height="2" fill="#555555"/>
<text x="124.0" y="70.8" font-family="Liberation Sans" font-size="8.3" fill="#a4a4a4" textLength="12" lengthAdjust="spacingAndGlyphs">1400</text>
<rect x="148.1" y="60.5" width="0.9" height="11.5" fill="#6e6e6e"/>
<rect x="151.3" y="70.0" width="0.6" height="2" fill="#555555"/>
<rect x="154.6" y="70.0" width="0.6" height="2" fill="#555555"/>
<rect x="157.8" y="70.0" width="0.6" height="2" fill="#555555"/>
<rect x="161.1" y="68.0" width="0.6" height="4" fill="#555555"/>
<rect x="164.3" y="70.0" width="0.6" height="2" fill="#555555"/>
<rect x="167.5" y="70.0" width="0.6" height="2" fill="#555555"/>
<rect x="170.8" y="70.0" width="0.6" height="2" fill="#555555"/>
<text x="149.9" y="70.8" font-family="Liberation Sans" font-size="8.3" fill="#a4a4a4" textLength="12" lengthAdjust="spacingAndGlyphs">1200</text>
<rect x="174.0" y="60.5" width="0.9" height="11.5" fill="#6e6e6e"/>
<rect x="177.2" y="70.0" width="0.6" height="2" fill="#555555"/>
<rect x="180.5" y="70.0" width="0.6" height="2" fill="#555555"/>
<rect x="183.7" y="70.0" width="0.6" height="2" fill="#555555"/>
<rect x="186.9" y="68.0" width="0.6" height="4" fill="#555555"/>
<rect x="190.2" y="70.0" width="0.6" height="2" fill="#555555"/>
<rect x="193.4" y="70.0" width="0.6" height="2" fill="#555555"/>
<rect x="196.7" y="70.0" width="0.6" height="2" fill="#555555"/>
<text x="175.8" y="70.8" font-family="Liberation Sans" font-size="8.3" fill="#a4a4a4" textLength="12" lengthAdjust="spacingAndGlyphs">1000</text>
<rect x="199.9" y="60.5" width="0.9" height="11.5" fill="#6e6e6e"/>
<rect x="203.1" y="70.0" width="0.6" height="2" fill="#555555"/>
<rect x="206.4" y="70.0" width="0.6" height="2" fill="#555555"/>
<rect x="209.6" y="70.0" width="0.6" height="2" fill="#555555"/>
<rect x="212.8" y="68.0" width="0.6" height="4" fill="#555555"/>
<rect x="216.1" y="70.0" width="0.6" height="2" fill="#555555"/>
<rect x="219.3" y="70.0" width="0.6" height="2" fill="#555555"/>
<rect x="222.6" y="70.0" width="0.6" height="2" fill="#555555"/>
<text x="201.7" y="70.8" font-family="Liberation Sans" font-size="8.3" fill="#a4a4a4" textLength="12" lengthAdjust="spacingAndGlyphs">800</text>
<rect x="225.8" y="60.5" width="0.9" height="11.5" fill="#6e6e6e"/>
<rect x="229.0" y="70.0" width="0.6" height="2" fill="#555555"/>
<rect x="232.3" y="70.0" width="0.6" height="2" fill="#555555"/>
<rect x="235.5" y="70.0" width="0.6" height="2" fill="#555555"/>
<rect x="238.8" y="68.0" width="0.6" height="4" fill="#555555"/>
<rect x="242.0" y="70.0" width="0.6" height="2" fill="#555555"/>
<rect x="245.2" y="70.0" width="0.6" height="2" fill="#555555"/>
<rect x="248.5" y="70.0" width="0.6" height="2" fill="#555555"/>
<text x="227.6" y="70.8" font-family="Liberation Sans" font-size="8.3" fill="#a4a4a4" textLength="12" lengthAdjust="spacingAndGlyphs">600</text>
<rect x="251.7" y="60.5" width="0.9" height="11.5" fill="#6e6e6e"/>
<rect x="254.9" y="70.0" width="0.6" height="2" fill="#555555"/>
<rect x="258.2" y="70.0" width="0.6" height="2" fill="#555555"/>
<rect x="261.4" y="70.0" width="0.6" height="2" fill="#555555"/>
<rect x="264.6" y="68.0" width="0.6" height="4" fill="#555555"/>
<rect x="267.9" y="70.0" width="0.6" height="2" fill="#555555"/>
<rect x="271.1" y="70.0" width="0.6" height="2" fill="#555555"/>
<rect x="274.4" y="70.0" width="0.6" height="2" fill="#555555"/>
<text x="253.5" y="70.8" font-family="Liberation Sans" font-size="8.3" fill="#a4a4a4" textLength="12" lengthAdjust="spacingAndGlyphs">400</text>
<rect x="277.6" y="60.5" width="0.9" height="11.5" fill="#6e6e6e"/>
<rect x="280.8" y="70.0" width="0.6" height="2" fill="#555555"/>
<rect x="284.1" y="70.0" width="0.6" height="2" fill="#555555"/>
<rect x="287.3" y="70.0" width="0.6" height="2" fill="#555555"/>
<rect x="290.6" y="68.0" width="0.6" height="4" fill="#555555"/>
<rect x="293.8" y="70.0" width="0.6" height="2" fill="#555555"/>
<rect x="297.0" y="70.0" width="0.6" height="2" fill="#555555"/>
<rect x="300.3" y="70.0" width="0.6" height="2" fill="#555555"/>
<text x="279.4" y="70.8" font-family="Liberation Sans" font-size="8.3" fill="#a4a4a4" textLength="12" lengthAdjust="spacingAndGlyphs">200</text>
<rect x="303.5" y="60.5" width="0.9" height="11.5" fill="#6e6e6e"/>
<rect x="306.7" y="70.0" width="0.6" height="2" fill="#555555"/>
<rect x="310.0" y="70.0" width="0.6" height="2" fill="#555555"/>
<rect x="313.2" y="70.0" width="0.6" height="2" fill="#555555"/>
<rect x="316.4" y="68.0" width="0.6" height="4" fill="#555555"/>
<rect x="319.7" y="70.0" width="0.6" height="2" fill="#555555"/>
<rect x="322.9" y="70.0" width="0.6" height="2" fill="#555555"/>
<rect x="326.2" y="70.0" width="0.6" height="2" fill="#555555"/>
<text x="305.3" y="70.8" font-family="Liberation Sans" font-size="8.3" fill="#a4a4a4" textLength="4" lengthAdjust="spacingAndGlyphs">0</text>
<rect x="329.4" y="60.5" width="0.9" height="11.5" fill="#6e6e6e"/>
<rect x="332.6" y="70.0" width="0.6" height="2" fill="#555555"/>
<rect x="335.9" y="70.0" width="0.6" height="2" fill="#555555"/>
<rect x="339.1" y="70.0" width="0.6" height="2" fill="#555555"/>
<rect x="342.3" y="68.0" width="0.6" height="4" fill="#555555"/>
<rect x="345.6" y="70.0" width="0.6" height="2" fill="#555555"/>
<rect x="348.8" y="70.0" width="0.6" height="2" fill="#555555"/>
<rect x="352.1" y="70.0" width="0.6" height="2" fill="#555555"/>
<text x="331.2" y="70.8" font-family="Liberation Sans" font-size="8.3" fill="#a4a4a4" textLength="12" lengthAdjust="spacingAndGlyphs">200</text>
<rect x="355.3" y="60.5" width="0.9" height="11.5" fill="#6e6e6e"/>
<rect x="358.5" y="70.0" width="0.6" height="2" fill="#555555"/>
<rect x="361.8" y="70.0" width="0.6" height="2" fill="#555555"/>
<rect x="365.0" y="70.0" width="0.6" height="2" fill="#555555"/>
<rect x="368.2" y="68.0" width="0.6" height="4" fill="#555555"/>
<rect x="371.5" y="70.0" width="0.6" height="2" fill="#555555"/>
<rect x="374.7" y="70.0" width="0.6" height="2" fill="#555555"/>
<rect x="378.0" y="70.0" width="0.6" height="2" fill="#555555"/>
<text x="357.1" y="70.8" font-family="Liberation Sans" font-size="8.3" fill="#a4a4a4" textLength="12" lengthAdjust="spacingAndGlyphs">400</text>
<rect x="381.2" y="60.5" width="0.9" height="11.5" fill="#6e6e6e"/>
<rect x="384.4" y="70.0" width="0.6" height="2" fill="#555555"/>
<rect x="387.7" y="70.0" width="0.6" height="2" fill="#555555"/>
<rect x="390.9" y="70.0" width="0.6" height="2" fill="#555555"/>
<rect x="394.1" y="68.0" width="0.6" height="4" fill="#555555"/>
<rect x="397.4" y="70.0" width="0.6" height="2" fill="#555555"/>
<rect x="400.6" y="70.0" width="0.6" height="2" fill="#555555"/>
<rect x="403.9" y="70.0" width="0.6" height="2" fill="#555555"/>
<text x="383.0" y="70.8" font-family="Liberation Sans" font-size="8.3" fill="#a4a4a4" textLength="12" lengthAdjust="spacingAndGlyphs">600</text>
<rect x="407.1" y="60.5" width="0.9" height="11.5" fill="#6e6e6e"/>
<rect x="410.3" y="70.0" width="0.6" height="2" fill="#555555"/>
<rect x="413.6" y="70.0" width="0.6" height="2" fill="#555555"/>
<rect x="416.8" y="70.0" width="0.6" height="2" fill="#555555"/>
<rect x="420.1" y="68.0" width="0.6" height="4" fill="#555555"/>
<rect x="423.3" y="70.0" width="0.6" height="2" fill="#555555"/>
<rect x="426.5" y="70.0" width="0.6" height="2" fill="#555555"/>
<rect x="429.8" y="70.0" width="0.6" height="2" fill="#555555"/>
<text x="408.9" y="70.8" font-family="Liberation Sans" font-size="8.3" fill="#a4a4a4" textLength="12" lengthAdjust="spacingAndGlyphs">800</text>
<rect x="433.0" y="60.5" width="0.9" height="11.5" fill="#6e6e6e"/>
<rect x="436.2" y="70.0" width="0.6" height="2" fill="#555555"/>
<rect x="439.5" y="70.0" width="0.6" height="2" fill="#555555"/>
<rect x="442.7" y="70.0" width="0.6" height="2" fill="#555555"/>
<rect x="445.9" y="68.0" width="0.6" height="4" fill="#555555"/>
<rect x="449.2" y="70.0" width="0.6" height="2" fill="#555555"/>
<rect x="452.4" y="70.0" width="0.6" height="2" fill="#555555"/>
<rect x="455.7" y="70.0" width="0.6" height="2" fill="#555555"/>
<text x="434.8" y="70.8" font-family="Liberation Sans" font-size="8.3" fill="#a4a4a4" textLength="12" lengthAdjust="spacingAndGlyphs">1000</text>
<rect x="458.9" y="60.5" width="0.9" height="11.5" fill="#6e6e6e"/>
<rect x="462.1" y="70.0" width="0.6" height="2" fill="#555555"/>
<rect x="465.4" y="70.0" width="0.6" height="2" fill="#555555"/>
<rect x="468.6" y="70.0" width="0.6" height="2" fill="#555555"/>
<rect x="471.8" y="68.0" width="0.6" height="4" fill="#555555"/>
<rect x="475.1" y="70.0" width="0.6" height="2" fill="#555555"/>
<rect x="478.3" y="70.0" width="0.6" height="2" fill="#555555"/>
<rect x="481.6" y="70.0" width="0.6" height="2" fill="#555555"/>
<text x="460.7" y="70.8" font-family="Liberation Sans" font-size="8.3" fill="#a4a4a4" textLength="12" lengthAdjust="spacingAndGlyphs">1200</text>
<rect x="484.8" y="60.5" width="0.9" height="11.5" fill="#6e6e6e"/>
<rect x="488.0" y="70.0" width="0.6" height="2" fill="#555555"/>
<rect x="491.3" y="70.0" width="0.6" height="2" fill="#555555"/>
<rect x="494.5" y="70.0" width="0.6" height="2" fill="#555555"/>
<rect x="497.7" y="68.0" width="0.6" height="4" fill="#555555"/>
<rect x="501.0" y="70.0" width="0.6" height="2" fill="#555555"/>
<rect x="504.2" y="70.0" width="0.6" height="2" fill="#555555"/>
<rect x="507.5" y="70.0" width="0.6" height="2" fill="#555555"/>
<text x="486.6" y="70.8" font-family="Liberation Sans" font-size="8.3" fill="#a4a4a4" textLength="12" lengthAdjust="spacingAndGlyphs">1400</text>
<rect x="510.7" y="60.5" width="0.9" height="11.5" fill="#6e6e6e"/>
<rect x="513.9" y="70.0" width="0.6" height="2" fill="#555555"/>
<rect x="517.2" y="70.0" width="0.6" height="2" fill="#555555"/>
<rect x="520.4" y="70.0" width="0.6" height="2" fill="#555555"/>
<rect x="523.6" y="68.0" width="0.6" height="4" fill="#555555"/>
<rect x="526.9" y="70.0" width="0.6" height="2" fill="#555555"/>
<rect x="530.1" y="70.0" width="0.6" height="2" fill="#555555"/>
<rect x="533.4" y="70.0" width="0.6" height="2" fill="#555555"/>
<text x="512.5" y="70.8" font-family="Liberation Sans" font-size="8.3" fill="#a4a4a4" textLength="12" lengthAdjust="spacingAndGlyphs">1600</text>
<rect x="536.6" y="60.5" width="0.9" height="11.5" fill="#6e6e6e"/>
<rect x="539.8" y="70.0" width="0.6" height="2" fill="#555555"/>
<rect x="543.1" y="70.0" width="0.6" height="2" fill="#555555"/>
<rect x="546.3" y="70.0" width="0.6" height="2" fill="#555555"/>
<rect x="549.6" y="68.0" width="0.6" height="4" fill="#555555"/>
<rect x="552.8" y="70.0" width="0.6" height="2" fill="#555555"/>
<rect x="556.0" y="70.0" width="0.6" height="2" fill="#555555"/>
<rect x="559.3" y="70.0" width="0.6" height="2" fill="#555555"/>
<text x="538.4" y="70.8" font-family="Liberation Sans" font-size="8.3" fill="#a4a4a4" textLength="12" lengthAdjust="spacingAndGlyphs">1800</text>
<rect x="562.5" y="60.5" width="0.9" height="11.5" fill="#6e6e6e"/>
<rect x="565.7" y="70.0" width="0.6" height="2" fill="#555555"/>
<rect x="569.0" y="70.0" width="0.6" height="2" fill="#555555"/>
<rect x="572.2" y="70.0" width="0.6" height="2" fill="#555555"/>
<rect x="575.5" y="68.0" width="0.6" height="4" fill="#555555"/>
<rect x="578.7" y="70.0" width="0.6" height="2" fill="#555555"/>
<rect x="581.9" y="70.0" width="0.6" height="2" fill="#555555"/>
<rect x="585.2" y="70.0" width="0.6" height="2" fill="#555555"/>
<text x="564.3" y="70.8" font-family="Liberation Sans" font-size="8.3" fill="#a4a4a4" textLength="12" lengthAdjust="spacingAndGlyphs">2000</text>
<rect x="588.4" y="60.5" width="0.9" height="11.5" fill="#6e6e6e"/>
<rect x="591.6" y="70.0" width="0.6" height="2" fill="#555555"/>
<rect x="594.9" y="70.0" width="0.6" height="2" fill="#555555"/>
<rect x="598.1" y="70.0" width="0.6" height="2" fill="#555555"/>
<rect x="601.4" y="68.0" width="0.6" height="4" fill="#555555"/>
<rect x="604.6" y="70.0" width="0.6" height="2" fill="#555555"/>
<rect x="607.8" y="70.0" width="0.6" height="2" fill="#555555"/>
<rect x="611.1" y="70.0" width="0.6" height="2" fill="#555555"/>
<text x="590.2" y="70.8" font-family="Liberation Sans" font-size="8.3" fill="#a4a4a4" textLength="12" lengthAdjust="spacingAndGlyphs">2200</text>
<rect x="614.3" y="60.5" width="0.9" height="11.5" fill="#6e6e6e"/>
<rect x="617.5" y="70.0" width="0.6" height="2" fill="#555555"/>
<rect x="620.8" y="70.0" width="0.6" height="2" fill="#555555"/>
<rect x="624.0" y="70.0" width="0.6" height="2" fill="#555555"/>
<rect x="627.2" y="68.0" width="0.6" height="4" fill="#555555"/>
<rect x="630.5" y="70.0" width="0.6" height="2" fill="#555555"/>
<rect x="633.7" y="70.0" width="0.6" height="2" fill="#555555"/>
<rect x="637.0" y="70.0" width="0.6" height="2" fill="#555555"/>
<text x="616.1" y="70.8" font-family="Liberation Sans" font-size="8.3" fill="#a4a4a4" textLength="12" lengthAdjust="spacingAndGlyphs">2400</text>
<rect x="640.2" y="60.5" width="0.9" height="11.5" fill="#6e6e6e"/>
<rect x="643.4" y="70.0" width="0.6" height="2" fill="#555555"/>
<rect x="646.7" y="70.0" width="0.6" height="2" fill="#555555"/>
<rect x="649.9" y="70.0" width="0.6" height="2" fill="#555555"/>
<rect x="653.2" y="68.0" width="0.6" height="4" fill="#555555"/>
<rect x="656.4" y="70.0" width="0.6" height="2" fill="#555555"/>
<rect x="659.6" y="70.0" width="0.6" height="2" fill="#555555"/>
<rect x="662.9" y="70.0" width="0.6" height="2" fill="#555555"/>
<text x="642.0" y="70.8" font-family="Liberation Sans" font-size="8.3" fill="#a4a4a4" textLength="12" lengthAdjust="spacingAndGlyphs">2600</text>
<rect x="666.1" y="60.5" width="0.9" height="11.5" fill="#6e6e6e"/>
<rect x="669.3" y="70.0" width="0.6" height="2" fill="#555555"/>
<rect x="672.6" y="70.0" width="0.6" height="2" fill="#555555"/>
<rect x="675.8" y="70.0" width="0.6" height="2" fill="#555555"/>
<rect x="679.0" y="68.0" width="0.6" height="4" fill="#555555"/>
<rect x="682.3" y="70.0" width="0.6" height="2" fill="#555555"/>
<rect x="685.5" y="70.0" width="0.6" height="2" fill="#555555"/>
<rect x="688.8" y="70.0" width="0.6" height="2" fill="#555555"/>
<text x="667.9" y="70.8" font-family="Liberation Sans" font-size="8.3" fill="#a4a4a4" textLength="12" lengthAdjust="spacingAndGlyphs">2800</text>
<rect x="692.0" y="60.5" width="0.9" height="11.5" fill="#6e6e6e"/>
<rect x="695.2" y="70.0" width="0.6" height="2" fill="#555555"/>
<rect x="698.5" y="70.0" width="0.6" height="2" fill="#555555"/>
<rect x="701.7" y="70.0" width="0.6" height="2" fill="#555555"/>
<rect x="705.0" y="68.0" width="0.6" height="4" fill="#555555"/>
<rect x="708.2" y="70.0" width="0.6" height="2" fill="#555555"/>
<rect x="711.4" y="70.0" width="0.6" height="2" fill="#555555"/>
<rect x="714.7" y="70.0" width="0.6" height="2" fill="#555555"/>
<text x="693.8" y="70.8" font-family="Liberation Sans" font-size="8.3" fill="#a4a4a4" textLength="12" lengthAdjust="spacingAndGlyphs">3000</text>
<rect x="717.9" y="60.5" width="0.9" height="11.5" fill="#6e6e6e"/>
<rect x="721.1" y="70.0" width="0.6" height="2" fill="#555555"/>
<rect x="724.4" y="70.0" width="0.6" height="2" fill="#555555"/>
<rect x="727.6" y="70.0" width="0.6" height="2" fill="#555555"/>
<rect x="730.9" y="68.0" width="0.6" height="4" fill="#555555"/>
<rect x="734.1" y="70.0" width="0.6" height="2" fill="#555555"/>
<rect x="737.3" y="70.0" width="0.6" height="2" fill="#555555"/>
<rect x="740.6" y="70.0" width="0.6" height="2" fill="#555555"/>
<text x="719.7" y="70.8" font-family="Liberation Sans" font-size="8.3" fill="#a4a4a4" textLength="12" lengthAdjust="spacingAndGlyphs">3200</text>
<rect x="743.8" y="60.5" width="0.9" height="11.5" fill="#6e6e6e"/>
<rect x="747.0" y="70.0" width="0.6" height="2" fill="#555555"/>
<rect x="750.3" y="70.0" width="0.6" height="2" fill="#555555"/>
<rect x="753.5" y="70.0" width="0.6" height="2" fill="#555555"/>
<rect x="756.8" y="68.0" width="0.6" height="4" fill="#555555"/>
<rect x="760.0" y="70.0" width="0.6" height="2" fill="#555555"/>
<rect x="763.2" y="70.0" width="0.6" height="2" fill="#555555"/>
<rect x="766.5" y="70.0" width="0.6" height="2" fill="#555555"/>
<text x="745.6" y="70.8" font-family="Liberation Sans" font-size="8.3" fill="#a4a4a4" textLength="12" lengthAdjust="spacingAndGlyphs">3400</text>
<rect x="769.7" y="60.5" width="0.9" height="11.5" fill="#6e6e6e"/>
<rect x="772.9" y="70.0" width="0.6" height="2" fill="#555555"/>
<rect x="776.2" y="70.0" width="0.6" height="2" fill="#555555"/>
<rect x="779.4" y="70.0" width="0.6" height="2" fill="#555555"/>
<rect x="782.7" y="68.0" width="0.6" height="4" fill="#555555"/>
<rect x="785.9" y="70.0" width="0.6" height="2" fill="#555555"/>
<rect x="789.1" y="70.0" width="0.6" height="2" fill="#555555"/>
<rect x="792.4" y="70.0" width="0.6" height="2" fill="#555555"/>
<text x="771.5" y="70.8" font-family="Liberation Sans" font-size="8.3" fill="#a4a4a4" textLength="12" lengthAdjust="spacingAndGlyphs">3600</text>
<rect x="795.6" y="60.5" width="0.9" height="11.5" fill="#6e6e6e"/>
<rect x="798.8" y="70.0" width="0.6" height="2" fill="#555555"/>
<rect x="802.1" y="70.0" width="0.6" height="2" fill="#555555"/>
<rect x="805.3" y="70.0" width="0.6" height="2" fill="#555555"/>
<rect x="808.5" y="68.0" width="0.6" height="4" fill="#555555"/>
<rect x="811.8" y="70.0" width="0.6" height="2" fill="#555555"/>
<rect x="815.0" y="70.0" width="0.6" height="2" fill="#555555"/>
<rect x="818.3" y="70.0" width="0.6" height="2" fill="#555555"/>
<text x="797.4" y="70.8" font-family="Liberation Sans" font-size="8.3" fill="#a4a4a4" textLength="12" lengthAdjust="spacingAndGlyphs">3800</text>
<rect x="821.5" y="60.5" width="0.9" height="11.5" fill="#6e6e6e"/>
<rect x="824.7" y="70.0" width="0.6" height="2" fill="#555555"/>
<rect x="828.0" y="70.0" width="0.6" height="2" fill="#555555"/>
<rect x="831.2" y="70.0" width="0.6" height="2" fill="#555555"/>
<rect x="834.5" y="68.0" width="0.6" height="4" fill="#555555"/>
<rect x="837.7" y="70.0" width="0.6" height="2" fill="#555555"/>
<rect x="840.9" y="70.0" width="0.6" height="2" fill="#555555"/>
<rect x="844.2" y="70.0" width="0.6" height="2" fill="#555555"/>
<text x="823.3" y="70.8" font-family="Liberation Sans" font-size="8.3" fill="#a4a4a4" textLength="12" lengthAdjust="spacingAndGlyphs">4000</text>
<rect x="847.4" y="60.5" width="0.9" height="11.5" fill="#6e6e6e"/>
<rect x="850.6" y="70.0" width="0.6" height="2" fill="#555555"/>
<rect x="853.9" y="70.0" width="0.6" height="2" fill="#555555"/>
<rect x="857.1" y="70.0" width="0.6" height="2" fill="#555555"/>
<text x="849.2" y="70.8" font-family="Liberation Sans" font-size="8.3" fill="#a4a4a4" textLength="12" lengthAdjust="spacingAndGlyphs">4200</text>
</svg>
<svg class="a" style="left:25px;top:72px" width="11" height="640" viewBox="25 72 11 640">
<rect x="25" y="72.2" width="11" height="0.9" fill="#555555"/>
<rect x="34.4" y="75.8" width="1.6" height="0.6" fill="#595959"/>
<rect x="34.4" y="79.4" width="1.6" height="0.6" fill="#595959"/>
<rect x="34.4" y="83.0" width="1.6" height="0.6" fill="#595959"/>
<rect x="33.0" y="86.5" width="3" height="0.6" fill="#595959"/>
<rect x="34.4" y="90.1" width="1.6" height="0.6" fill="#595959"/>
<rect x="34.4" y="93.7" width="1.6" height="0.6" fill="#595959"/>
<rect x="34.4" y="97.3" width="1.6" height="0.6" fill="#595959"/>
<text x="27" y="73.0" transform="rotate(90 27 73.0)" font-family="Liberation Sans" font-size="7.4" fill="#a8a8a8" textLength="19.2" lengthAdjust="spacingAndGlyphs">800</text>
<rect x="25" y="100.9" width="11" height="0.9" fill="#555555"/>
<rect x="34.4" y="104.5" width="1.6" height="0.6" fill="#595959"/>
<rect x="34.4" y="108.1" width="1.6" height="0.6" fill="#595959"/>
<rect x="34.4" y="111.7" width="1.6" height="0.6" fill="#595959"/>
<rect x="33.0" y="115.2" width="3" height="0.6" fill="#595959"/>
<rect x="34.4" y="118.8" width="1.6" height="0.6" fill="#595959"/>
<rect x="34.4" y="122.4" width="1.6" height="0.6" fill="#595959"/>
<rect x="34.4" y="126.0" width="1.6" height="0.6" fill="#595959"/>
<text x="27" y="101.7" transform="rotate(90 27 101.7)" font-family="Liberation Sans" font-size="7.4" fill="#a8a8a8" textLength="19.2" lengthAdjust="spacingAndGlyphs">600</text>
<rect x="25" y="129.6" width="11" height="0.9" fill="#555555"/>
<rect x="34.4" y="133.2" width="1.6" height="0.6" fill="#595959"/>
<rect x="34.4" y="136.8" width="1.6" height="0.6" fill="#595959"/>
<rect x="34.4" y="140.4" width="1.6" height="0.6" fill="#595959"/>
<rect x="33.0" y="143.9" width="3" height="0.6" fill="#595959"/>
<rect x="34.4" y="147.5" width="1.6" height="0.6" fill="#595959"/>
<rect x="34.4" y="151.1" width="1.6" height="0.6" fill="#595959"/>
<rect x="34.4" y="154.7" width="1.6" height="0.6" fill="#595959"/>
<text x="27" y="130.4" transform="rotate(90 27 130.4)" font-family="Liberation Sans" font-size="7.4" fill="#a8a8a8" textLength="19.2" lengthAdjust="spacingAndGlyphs">400</text>
<rect x="25" y="158.3" width="11" height="0.9" fill="#555555"/>
<rect x="34.4" y="161.9" width="1.6" height="0.6" fill="#595959"/>
<rect x="34.4" y="165.5" width="1.6" height="0.6" fill="#595959"/>
<rect x="34.4" y="169.1" width="1.6" height="0.6" fill="#595959"/>
<rect x="33.0" y="172.7" width="3" height="0.6" fill="#595959"/>
<rect x="34.4" y="176.2" width="1.6" height="0.6" fill="#595959"/>
<rect x="34.4" y="179.8" width="1.6" height="0.6" fill="#595959"/>
<rect x="34.4" y="183.4" width="1.6" height="0.6" fill="#595959"/>
<text x="27" y="159.1" transform="rotate(90 27 159.1)" font-family="Liberation Sans" font-size="7.4" fill="#a8a8a8" textLength="19.2" lengthAdjust="spacingAndGlyphs">200</text>
<rect x="25" y="187.0" width="11" height="0.9" fill="#555555"/>
<rect x="34.4" y="190.6" width="1.6" height="0.6" fill="#595959"/>
<rect x="34.4" y="194.2" width="1.6" height="0.6" fill="#595959"/>
<rect x="34.4" y="197.8" width="1.6" height="0.6" fill="#595959"/>
<rect x="33.0" y="201.3" width="3" height="0.6" fill="#595959"/>
<rect x="34.4" y="204.9" width="1.6" height="0.6" fill="#595959"/>
<rect x="34.4" y="208.5" width="1.6" height="0.6" fill="#595959"/>
<rect x="34.4" y="212.1" width="1.6" height="0.6" fill="#595959"/>
<text x="27" y="187.8" transform="rotate(90 27 187.8)" font-family="Liberation Sans" font-size="7.4" fill="#a8a8a8" textLength="6.4" lengthAdjust="spacingAndGlyphs">0</text>
<rect x="25" y="215.7" width="11" height="0.9" fill="#555555"/>
<rect x="34.4" y="219.3" width="1.6" height="0.6" fill="#595959"/>
<rect x="34.4" y="222.9" width="1.6" height="0.6" fill="#595959"/>
<rect x="34.4" y="226.5" width="1.6" height="0.6" fill="#595959"/>
<rect x="33.0" y="230.0" width="3" height="0.6" fill="#595959"/>
<rect x="34.4" y="233.6" width="1.6" height="0.6" fill="#595959"/>
<rect x="34.4" y="237.2" width="1.6" height="0.6" fill="#595959"/>
<rect x="34.4" y="240.8" width="1.6" height="0.6" fill="#595959"/>
<text x="27" y="216.5" transform="rotate(90 27 216.5)" font-family="Liberation Sans" font-size="7.4" fill="#a8a8a8" textLength="19.2" lengthAdjust="spacingAndGlyphs">200</text>
<rect x="25" y="244.4" width="11" height="0.9" fill="#555555"/>
<rect x="34.4" y="248.0" width="1.6" height="0.6" fill="#595959"/>
<rect x="34.4" y="251.6" width="1.6" height="0.6" fill="#595959"/>
<rect x="34.4" y="255.2" width="1.6" height="0.6" fill="#595959"/>
<rect x="33.0" y="258.8" width="3" height="0.6" fill="#595959"/>
<rect x="34.4" y="262.3" width="1.6" height="0.6" fill="#595959"/>
<rect x="34.4" y="265.9" width="1.6" height="0.6" fill="#595959"/>
<rect x="34.4" y="269.5" width="1.6" height="0.6" fill="#595959"/>
<text x="27" y="245.2" transform="rotate(90 27 245.2)" font-family="Liberation Sans" font-size="7.4" fill="#a8a8a8" textLength="19.2" lengthAdjust="spacingAndGlyphs">400</text>
<rect x="25" y="273.1" width="11" height="0.9" fill="#555555"/>
<rect x="34.4" y="276.7" width="1.6" height="0.6" fill="#595959"/>
<rect x="34.4" y="280.3" width="1.6" height="0.6" fill="#595959"/>
<rect x="34.4" y="283.9" width="1.6" height="0.6" fill="#595959"/>
<rect x="33.0" y="287.5" width="3" height="0.6" fill="#595959"/>
<rect x="34.4" y="291.0" width="1.6" height="0.6" fill="#595959"/>
<rect x="34.4" y="294.6" width="1.6" height="0.6" fill="#595959"/>
<rect x="34.4" y="298.2" width="1.6" height="0.6" fill="#595959"/>
<text x="27" y="273.9" transform="rotate(90 27 273.9)" font-family="Liberation Sans" font-size="7.4" fill="#a8a8a8" textLength="19.2" lengthAdjust="spacingAndGlyphs">600</text>
<rect x="25" y="301.8" width="11" height="0.9" fill="#555555"/>
<rect x="34.4" y="305.4" width="1.6" height="0.6" fill="#595959"/>
<rect x="34.4" y="309.0" width="1.6" height="0.6" fill="#595959"/>
<rect x="34.4" y="312.6" width="1.6" height="0.6" fill="#595959"/>
<rect x="33.0" y="316.2" width="3" height="0.6" fill="#595959"/>
<rect x="34.4" y="319.7" width="1.6" height="0.6" fill="#595959"/>
<rect x="34.4" y="323.3" width="1.6" height="0.6" fill="#595959"/>
<rect x="34.4" y="326.9" width="1.6" height="0.6" fill="#595959"/>
<text x="27" y="302.6" transform="rotate(90 27 302.6)" font-family="Liberation Sans" font-size="7.4" fill="#a8a8a8" textLength="19.2" lengthAdjust="spacingAndGlyphs">800</text>
<rect x="25" y="330.5" width="11" height="0.9" fill="#555555"/>
<rect x="34.4" y="334.1" width="1.6" height="0.6" fill="#595959"/>
<rect x="34.4" y="337.7" width="1.6" height="0.6" fill="#595959"/>
<rect x="34.4" y="341.3" width="1.6" height="0.6" fill="#595959"/>
<rect x="33.0" y="344.9" width="3" height="0.6" fill="#595959"/>
<rect x="34.4" y="348.4" width="1.6" height="0.6" fill="#595959"/>
<rect x="34.4" y="352.0" width="1.6" height="0.6" fill="#595959"/>
<rect x="34.4" y="355.6" width="1.6" height="0.6" fill="#595959"/>
<text x="27" y="331.3" transform="rotate(90 27 331.3)" font-family="Liberation Sans" font-size="7.4" fill="#a8a8a8" textLength="25.6" lengthAdjust="spacingAndGlyphs">1000</text>
<rect x="25" y="359.2" width="11" height="0.9" fill="#555555"/>
<rect x="34.4" y="362.8" width="1.6" height="0.6" fill="#595959"/>
<rect x="34.4" y="366.4" width="1.6" height="0.6" fill="#595959"/>
<rect x="34.4" y="370.0" width="1.6" height="0.6" fill="#595959"/>
<rect x="33.0" y="373.6" width="3" height="0.6" fill="#595959"/>
<rect x="34.4" y="377.1" width="1.6" height="0.6" fill="#595959"/>
<rect x="34.4" y="380.7" width="1.6" height="0.6" fill="#595959"/>
<rect x="34.4" y="384.3" width="1.6" height="0.6" fill="#595959"/>
<text x="27" y="360.0" transform="rotate(90 27 360.0)" font-family="Liberation Sans" font-size="7.4" fill="#a8a8a8" textLength="25.6" lengthAdjust="spacingAndGlyphs">1200</text>
<rect x="25" y="387.9" width="11" height="0.9" fill="#555555"/>
<rect x="34.4" y="391.5" width="1.6" height="0.6" fill="#595959"/>
<rect x="34.4" y="395.1" width="1.6" height="0.6" fill="#595959"/>
<rect x="34.4" y="398.7" width="1.6" height="0.6" fill="#595959"/>
<rect x="33.0" y="402.2" width="3" height="0.6" fill="#595959"/>
<rect x="34.4" y="405.8" width="1.6" height="0.6" fill="#595959"/>
<rect x="34.4" y="409.4" width="1.6" height="0.6" fill="#595959"/>
<rect x="34.4" y="413.0" width="1.6" height="0.6" fill="#595959"/>
<text x="27" y="388.7" transform="rotate(90 27 388.7)" font-family="Liberation Sans" font-size="7.4" fill="#a8a8a8" textLength="25.6" lengthAdjust="spacingAndGlyphs">1400</text>
<rect x="25" y="416.6" width="11" height="0.9" fill="#555555"/>
<rect x="34.4" y="420.2" width="1.6" height="0.6" fill="#595959"/>
<rect x="34.4" y="423.8" width="1.6" height="0.6" fill="#595959"/>
<rect x="34.4" y="427.4" width="1.6" height="0.6" fill="#595959"/>
<rect x="33.0" y="431.0" width="3" height="0.6" fill="#595959"/>
<rect x="34.4" y="434.5" width="1.6" height="0.6" fill="#595959"/>
<rect x="34.4" y="438.1" width="1.6" height="0.6" fill="#595959"/>
<rect x="34.4" y="441.7" width="1.6" height="0.6" fill="#595959"/>
<text x="27" y="417.4" transform="rotate(90 27 417.4)" font-family="Liberation Sans" font-size="7.4" fill="#a8a8a8" textLength="25.6" lengthAdjust="spacingAndGlyphs">1600</text>
<rect x="25" y="445.3" width="11" height="0.9" fill="#555555"/>
<rect x="34.4" y="448.9" width="1.6" height="0.6" fill="#595959"/>
<rect x="34.4" y="452.5" width="1.6" height="0.6" fill="#595959"/>
<rect x="34.4" y="456.1" width="1.6" height="0.6" fill="#595959"/>
<rect x="33.0" y="459.7" width="3" height="0.6" fill="#595959"/>
<rect x="34.4" y="463.2" width="1.6" height="0.6" fill="#595959"/>
<rect x="34.4" y="466.8" width="1.6" height="0.6" fill="#595959"/>
<rect x="34.4" y="470.4" width="1.6" height="0.6" fill="#595959"/>
<text x="27" y="446.1" transform="rotate(90 27 446.1)" font-family="Liberation Sans" font-size="7.4" fill="#a8a8a8" textLength="25.6" lengthAdjust="spacingAndGlyphs">1800</text>
<rect x="25" y="474.0" width="11" height="0.9" fill="#555555"/>
<rect x="34.4" y="477.6" width="1.6" height="0.6" fill="#595959"/>
<rect x="34.4" y="481.2" width="1.6" height="0.6" fill="#595959"/>
<rect x="34.4" y="484.8" width="1.6" height="0.6" fill="#595959"/>
<rect x="33.0" y="488.4" width="3" height="0.6" fill="#595959"/>
<rect x="34.4" y="491.9" width="1.6" height="0.6" fill="#595959"/>
<rect x="34.4" y="495.5" width="1.6" height="0.6" fill="#595959"/>
<rect x="34.4" y="499.1" width="1.6" height="0.6" fill="#595959"/>
<text x="27" y="474.8" transform="rotate(90 27 474.8)" font-family="Liberation Sans" font-size="7.4" fill="#a8a8a8" textLength="25.6" lengthAdjust="spacingAndGlyphs">2000</text>
<rect x="25" y="502.7" width="11" height="0.9" fill="#555555"/>
<rect x="34.4" y="506.3" width="1.6" height="0.6" fill="#595959"/>
<rect x="34.4" y="509.9" width="1.6" height="0.6" fill="#595959"/>
<rect x="34.4" y="513.5" width="1.6" height="0.6" fill="#595959"/>
<rect x="33.0" y="517.0" width="3" height="0.6" fill="#595959"/>
<rect x="34.4" y="520.6" width="1.6" height="0.6" fill="#595959"/>
<rect x="34.4" y="524.2" width="1.6" height="0.6" fill="#595959"/>
<rect x="34.4" y="527.8" width="1.6" height="0.6" fill="#595959"/>
<text x="27" y="503.5" transform="rotate(90 27 503.5)" font-family="Liberation Sans" font-size="7.4" fill="#a8a8a8" textLength="25.6" lengthAdjust="spacingAndGlyphs">2200</text>
<rect x="25" y="531.4" width="11" height="0.9" fill="#555555"/>
<rect x="34.4" y="535.0" width="1.6" height="0.6" fill="#595959"/>
<rect x="34.4" y="538.6" width="1.6" height="0.6" fill="#595959"/>
<rect x="34.4" y="542.2" width="1.6" height="0.6" fill="#595959"/>
<rect x="33.0" y="545.8" width="3" height="0.6" fill="#595959"/>
<rect x="34.4" y="549.3" width="1.6" height="0.6" fill="#595959"/>
<rect x="34.4" y="552.9" width="1.6" height="0.6" fill="#595959"/>
<rect x="34.4" y="556.5" width="1.6" height="0.6" fill="#595959"/>
<text x="27" y="532.2" transform="rotate(90 27 532.2)" font-family="Liberation Sans" font-size="7.4" fill="#a8a8a8" textLength="25.6" lengthAdjust="spacingAndGlyphs">2400</text>
<rect x="25" y="560.1" width="11" height="0.9" fill="#555555"/>
<rect x="34.4" y="563.7" width="1.6" height="0.6" fill="#595959"/>
<rect x="34.4" y="567.3" width="1.6" height="0.6" fill="#595959"/>
<rect x="34.4" y="570.9" width="1.6" height="0.6" fill="#595959"/>
<rect x="33.0" y="574.4" width="3" height="0.6" fill="#595959"/>
<rect x="34.4" y="578.0" width="1.6" height="0.6" fill="#595959"/>
<rect x="34.4" y="581.6" width="1.6" height="0.6" fill="#595959"/>
<rect x="34.4" y="585.2" width="1.6" height="0.6" fill="#595959"/>
<text x="27" y="560.9" transform="rotate(90 27 560.9)" font-family="Liberation Sans" font-size="7.4" fill="#a8a8a8" textLength="25.6" lengthAdjust="spacingAndGlyphs">2600</text>
<rect x="25" y="588.8" width="11" height="0.9" fill="#555555"/>
<rect x="34.4" y="592.4" width="1.6" height="0.6" fill="#595959"/>
<rect x="34.4" y="596.0" width="1.6" height="0.6" fill="#595959"/>
<rect x="34.4" y="599.6" width="1.6" height="0.6" fill="#595959"/>
<rect x="33.0" y="603.1" width="3" height="0.6" fill="#595959"/>
<rect x="34.4" y="606.7" width="1.6" height="0.6" fill="#595959"/>
<rect x="34.4" y="610.3" width="1.6" height="0.6" fill="#595959"/>
<rect x="34.4" y="613.9" width="1.6" height="0.6" fill="#595959"/>
<text x="27" y="589.6" transform="rotate(90 27 589.6)" font-family="Liberation Sans" font-size="7.4" fill="#a8a8a8" textLength="25.6" lengthAdjust="spacingAndGlyphs">2800</text>
<rect x="25" y="617.5" width="11" height="0.9" fill="#555555"/>
<rect x="34.4" y="621.1" width="1.6" height="0.6" fill="#595959"/>
<rect x="34.4" y="624.7" width="1.6" height="0.6" fill="#595959"/>
<rect x="34.4" y="628.3" width="1.6" height="0.6" fill="#595959"/>
<rect x="33.0" y="631.9" width="3" height="0.6" fill="#595959"/>
<rect x="34.4" y="635.4" width="1.6" height="0.6" fill="#595959"/>
<rect x="34.4" y="639.0" width="1.6" height="0.6" fill="#595959"/>
<rect x="34.4" y="642.6" width="1.6" height="0.6" fill="#595959"/>
<text x="27" y="618.3" transform="rotate(90 27 618.3)" font-family="Liberation Sans" font-size="7.4" fill="#a8a8a8" textLength="25.6" lengthAdjust="spacingAndGlyphs">3000</text>
<rect x="25" y="646.2" width="11" height="0.9" fill="#555555"/>
<rect x="34.4" y="649.8" width="1.6" height="0.6" fill="#595959"/>
<rect x="34.4" y="653.4" width="1.6" height="0.6" fill="#595959"/>
<rect x="34.4" y="657.0" width="1.6" height="0.6" fill="#595959"/>
<rect x="33.0" y="660.6" width="3" height="0.6" fill="#595959"/>
<rect x="34.4" y="664.1" width="1.6" height="0.6" fill="#595959"/>
<rect x="34.4" y="667.7" width="1.6" height="0.6" fill="#595959"/>
<rect x="34.4" y="671.3" width="1.6" height="0.6" fill="#595959"/>
<text x="27" y="647.0" transform="rotate(90 27 647.0)" font-family="Liberation Sans" font-size="7.4" fill="#a8a8a8" textLength="25.6" lengthAdjust="spacingAndGlyphs">3200</text>
<rect x="25" y="674.9" width="11" height="0.9" fill="#555555"/>
<rect x="34.4" y="678.5" width="1.6" height="0.6" fill="#595959"/>
<rect x="34.4" y="682.1" width="1.6" height="0.6" fill="#595959"/>
<rect x="34.4" y="685.7" width="1.6" height="0.6" fill="#595959"/>
<rect x="33.0" y="689.2" width="3" height="0.6" fill="#595959"/>
<rect x="34.4" y="692.8" width="1.6" height="0.6" fill="#595959"/>
<rect x="34.4" y="696.4" width="1.6" height="0.6" fill="#595959"/>
<rect x="34.4" y="700.0" width="1.6" height="0.6" fill="#595959"/>
<text x="27" y="675.7" transform="rotate(90 27 675.7)" font-family="Liberation Sans" font-size="7.4" fill="#a8a8a8" textLength="25.6" lengthAdjust="spacingAndGlyphs">3400</text>
<rect x="25" y="703.6" width="11" height="0.9" fill="#555555"/>
<rect x="34.4" y="707.2" width="1.6" height="0.6" fill="#595959"/>
<rect x="34.4" y="710.8" width="1.6" height="0.6" fill="#595959"/>
<text x="27" y="704.4" transform="rotate(90 27 704.4)" font-family="Liberation Sans" font-size="7.4" fill="#a8a8a8" textLength="25.6" lengthAdjust="spacingAndGlyphs">3600</text>
<text x="27" y="733.1" transform="rotate(90 27 733.1)" font-family="Liberation Sans" font-size="7.4" fill="#a8a8a8" textLength="25.6" lengthAdjust="spacingAndGlyphs">3800</text>
</svg>
<div class="a" style="left:323px;top:68px;width:1px;height:4px;background:#7fd8c8"></div>

<div class="a" style="left:25px;top:711px;width:30px;height:9px;background:#474747;"></div>
<div class="a" style="left:55px;top:711px;width:1px;height:9px;background:#444;"></div>
<svg class="a" style="left:0;top:0" width="1080" height="720" viewBox="0 0 1080 720">
<text x="5.0" y="11.5" font-family="Liberation Sans" font-size="6.5" fill="#7fd0ff" font-weight="bold" textLength="8.0" lengthAdjust="spacingAndGlyphs">Ps</text>
<text x="22.0" y="11.0" font-family="Liberation Sans" font-size="8.5" fill="#e4e4e4" textLength="11.0" lengthAdjust="spacingAndGlyphs">File</text>
<text x="41.0" y="11.0" font-family="Liberation Sans" font-size="8.5" fill="#e4e4e4" textLength="12.0" lengthAdjust="spacingAndGlyphs">Edit</text>
<text x="61.0" y="11.0" font-family="Liberation Sans" font-size="8.5" fill="#e4e4e4" textLength="20.0" lengthAdjust="spacingAndGlyphs">Image</text>
<text x="89.0" y="11.0" font-family="Liberation Sans" font-size="8.5" fill="#e4e4e4" textLength="18.0" lengthAdjust="spacingAndGlyphs">Layer</text>
<text x="114.0" y="11.0" font-family="Liberation Sans" font-size="8.5" fill="#e4e4e4" textLength="15.0" lengthAdjust="spacingAndGlyphs">Type</text>
<text x="137.0" y="11.0" font-family="Liberation Sans" font-size="8.5" fill="#e4e4e4" textLength="20.0" lengthAdjust="spacingAndGlyphs">Select</text>
<text x="164.0" y="11.0" font-family="Liberation Sans" font-size="8.5" fill="#e4e4e4" textLength="16.0" lengthAdjust="spacingAndGlyphs">Filter</text>
<text x="187.0" y="11.0" font-family="Liberation Sans" font-size="8.5" fill="#e4e4e4" textLength="10.0" lengthAdjust="spacingAndGlyphs">3D</text>
<text x="204.0" y="11.0" font-family="Liberation Sans" font-size="8.5" fill="#e4e4e4" textLength="16.0" lengthAdjust="spacingAndGlyphs">View</text>
<text x="228.0" y="11.0" font-family="Liberation Sans" font-size="8.5" fill="#e4e4e4" textLength="27.0" lengthAdjust="spacingAndGlyphs">Window</text>
<text x="262.0" y="11.0" font-family="Liberation Sans" font-size="8.5" fill="#e4e4e4" textLength="16.0" lengthAdjust="spacingAndGlyphs">Help</text>
<text x="32.0" y="52.7" font-family="Liberation Sans" font-size="7.5" fill="#f2f2f2" font-weight="bold" textLength="103.0" lengthAdjust="spacingAndGlyphs">Italy id.psd @ 20.7% (RGB/16) *</text>
<text x="139.0" y="52.5" font-family="Liberation Sans" font-size="7" fill="#8c8c8c" textLength="5.0" lengthAdjust="spacingAndGlyphs">×</text>
<text x="582.5" y="204.8" font-family="Liberation Sans" font-size="20" fill="#111" stroke="#111" stroke-width="0.85" textLength="81.3" lengthAdjust="spacingAndGlyphs">INVOICE</text>
<text x="418.0" y="223.0" font-family="Liberation Sans" font-size="5.5" fill="#262626" textLength="37.6" lengthAdjust="spacingAndGlyphs">[Company Name]</text>
<text x="418.0" y="231.2" font-family="Liberation Sans" font-size="5.5" fill="#262626" textLength="20.0" lengthAdjust="spacingAndGlyphs">[Address]</text>
<text x="418.0" y="239.5" font-family="Liberation Sans" font-size="5.5" fill="#262626" textLength="35.0" lengthAdjust="spacingAndGlyphs">[Phone Number</text>
<text x="418.0" y="247.5" font-family="Liberation Sans" font-size="5.5" fill="#262626" textLength="40.0" lengthAdjust="spacingAndGlyphs">[Website Address]</text>
<text x="418.0" y="272.0" font-family="Liberation Sans" font-size="5.5" fill="#262626" textLength="16.0" lengthAdjust="spacingAndGlyphs">[Name]</text>
<text x="418.0" y="280.5" font-family="Liberation Sans" font-size="5.5" fill="#262626" textLength="20.0" lengthAdjust="spacingAndGlyphs">[Address]</text>
<text x="418.0" y="288.4" font-family="Liberation Sans" font-size="5.5" fill="#262626" textLength="36.0" lengthAdjust="spacingAndGlyphs">[Phone Number]</text>
<text x="418.0" y="296.3" font-family="Liberation Sans" font-size="5.5" fill="#262626" textLength="34.0" lengthAdjust="spacingAndGlyphs">[Email Address]</text>
<text x="418.0" y="264.5" font-family="Liberation Sans" font-size="7" fill="#111111" font-weight="bold" textLength="29.0" lengthAdjust="spacingAndGlyphs">Invoice To:</text>
<text x="558.0" y="239.6" font-family="Liberation Sans" font-size="6.5" fill="#d4864f" textLength="24.0" lengthAdjust="spacingAndGlyphs">Invoice #</text>
<text x="629.8" y="239.6" font-family="Liberation Sans" font-size="6.5" fill="#d4864f" textLength="34.2" lengthAdjust="spacingAndGlyphs">Invoice Date</text>
<text x="560.0" y="247.5" font-family="Liberation Sans" font-size="7" fill="#000000" textLength="20.0" lengthAdjust="spacingAndGlyphs">58496</text>
<text x="626.0" y="247.5" font-family="Liberation Sans" font-size="7" fill="#000000" textLength="38.0" lengthAdjust="spacingAndGlyphs">29-04-2019</text>
<text x="557.0" y="271.9" font-family="Liberation Sans" font-size="6.5" fill="#d4864f" textLength="26.0" lengthAdjust="spacingAndGlyphs">Due Date</text>
<text x="625.6" y="271.9" font-family="Liberation Sans" font-size="6.5" fill="#d4864f" textLength="38.4" lengthAdjust="spacingAndGlyphs">Payment Date</text>
<text x="555.0" y="280.9" font-family="Liberation Sans" font-size="6.5" fill="#000000" textLength="30.0" lengthAdjust="spacingAndGlyphs">29-04-2019</text>
<text x="634.0" y="280.9" font-family="Liberation Sans" font-size="6.5" fill="#000000" textLength="30.0" lengthAdjust="spacingAndGlyphs">28-04-2019</text>
<text x="429.4" y="319.0" font-family="Liberation Sans" font-size="6.5" fill="#ffffff" textLength="14.0" lengthAdjust="spacingAndGlyphs">Date</text>
<text x="460.7" y="319.0" font-family="Liberation Sans" font-size="6.5" fill="#ffffff" textLength="31.3" lengthAdjust="spacingAndGlyphs">Description</text>
<text x="560.6" y="319.0" font-family="Liberation Sans" font-size="6.5" fill="#ffffff" textLength="25.8" lengthAdjust="spacingAndGlyphs">Qty / Hrs</text>
<text x="604.8" y="319.0" font-family="Liberation Sans" font-size="6.5" fill="#ffffff" textLength="12.2" lengthAdjust="spacingAndGlyphs">Rate</text>
<text x="638.0" y="319.0" font-family="Liberation Sans" font-size="6.5" fill="#ffffff" textLength="27.0" lengthAdjust="spacingAndGlyphs">Amount</text>
<text x="422.0" y="342.0" font-family="Liberation Sans" font-size="5.5" fill="#1e1e1e" textLength="28.0" lengthAdjust="spacingAndGlyphs">28-04-2019</text>
<text x="460.7" y="342.0" font-family="Liberation Sans" font-size="5.5" fill="#1e1e1e" textLength="34.3" lengthAdjust="spacingAndGlyphs">Doors Exterior</text>
<text x="572.0" y="342.0" font-family="Liberation Sans" font-size="5.5" fill="#1e1e1e" textLength="3.0" lengthAdjust="spacingAndGlyphs">2</text>
<text x="603.0" y="342.0" font-family="Liberation Sans" font-size="5.5" fill="#111" font-weight="bold" textLength="16.0" lengthAdjust="spacingAndGlyphs">$50.00</text>
<text x="640.0" y="342.0" font-family="Liberation Sans" font-size="5.5" fill="#1e1e1e" textLength="25.0" lengthAdjust="spacingAndGlyphs">$100.00</text>
<text x="422.0" y="365.5" font-family="Liberation Sans" font-size="5.5" fill="#1e1e1e" textLength="28.0" lengthAdjust="spacingAndGlyphs">29-04-2019</text>
<text x="460.7" y="365.5" font-family="Liberation Sans" font-size="5.5" fill="#1e1e1e" textLength="29.3" lengthAdjust="spacingAndGlyphs">Wc Cleaning</text>
<text x="572.0" y="365.5" font-family="Liberation Sans" font-size="5.5" fill="#1e1e1e" textLength="3.0" lengthAdjust="spacingAndGlyphs">2</text>
<text x="603.0" y="365.5" font-family="Liberation Sans" font-size="5.5" fill="#111" font-weight="bold" textLength="16.0" lengthAdjust="spacingAndGlyphs">$40.00</text>
<text x="640.0" y="365.5" font-family="Liberation Sans" font-size="5.5" fill="#1e1e1e" textLength="25.0" lengthAdjust="spacingAndGlyphs">$100.00</text>
<text x="642.0" y="389.0" font-family="Liberation Sans" font-size="5.5" fill="#1e1e1e" textLength="14.0" lengthAdjust="spacingAndGlyphs">$0.00</text>
<text x="642.0" y="412.2" font-family="Liberation Sans" font-size="5.5" fill="#1e1e1e" textLength="14.0" lengthAdjust="spacingAndGlyphs">$0.00</text>
<text x="642.0" y="435.7" font-family="Liberation Sans" font-size="5.5" fill="#1e1e1e" textLength="14.0" lengthAdjust="spacingAndGlyphs">$0.00</text>
<text x="642.0" y="459.0" font-family="Liberation Sans" font-size="5.5" fill="#1e1e1e" textLength="14.0" lengthAdjust="spacingAndGlyphs">$0.00</text>
<text x="596.8" y="478.9" font-family="Liberation Sans" font-size="5.5" fill="#1e1e1e" textLength="18.2" lengthAdjust="spacingAndGlyphs">Subtotal</text>
<text x="639.5" y="478.9" font-family="Liberation Sans" font-size="5.5" fill="#1e1e1e" textLength="18.8" lengthAdjust="spacingAndGlyphs">$200.00</text>
<text x="596.6" y="495.0" font-family="Liberation Sans" font-size="5.5" fill="#1e1e1e" textLength="22.2" lengthAdjust="spacingAndGlyphs">Tax @ 7%</text>
<text x="640.8" y="495.0" font-family="Liberation Sans" font-size="5.5" fill="#1e1e1e" textLength="15.6" lengthAdjust="spacingAndGlyphs">$14.00</text>
<text x="597.0" y="511.0" font-family="Liberation Sans" font-size="5.5" fill="#1e1e1e" textLength="15.0" lengthAdjust="spacingAndGlyphs">Others</text>
<text x="597.0" y="525.8" font-family="Liberation Sans" font-size="7" fill="#ffffff" font-weight="bold" textLength="14.0" lengthAdjust="spacingAndGlyphs">Total</text>
<text x="637.7" y="525.8" font-family="Liberation Sans" font-size="7" fill="#ffffff" font-weight="bold" textLength="22.3" lengthAdjust="spacingAndGlyphs">$214.00</text>
<text x="418.0" y="495.0" font-family="Liberation Sans" font-size="7" fill="#d4864f" textLength="51.0" lengthAdjust="spacingAndGlyphs">Payment Methods:</text>
<text x="418.0" y="510.0" font-family="Liberation Sans" font-size="5.5" fill="#1a1a1a" textLength="27.0" lengthAdjust="spacingAndGlyphs">[PayPal.id]</text>
<text x="418.0" y="516.0" font-family="Liberation Sans" font-size="5.5" fill="#1a1a1a" textLength="76.0" lengthAdjust="spacingAndGlyphs">We accept Visa, Master Card, etc.</text>
<text x="885.0" y="47.0" font-family="Liberation Sans" font-size="7" fill="#d0d0d0" textLength="6.0" lengthAdjust="spacingAndGlyphs">«</text>
<text x="1064.0" y="47.0" font-family="Liberation Sans" font-size="7" fill="#d0d0d0" textLength="6.0" lengthAdjust="spacingAndGlyphs">»</text>
<text x="901.0" y="60.7" font-family="Liberation Sans" font-size="7.5" fill="#b8b8b8" textLength="18.0" lengthAdjust="spacingAndGlyphs">Swatc</text>
<text x="924.0" y="60.7" font-family="Liberation Sans" font-size="7.5" fill="#b8b8b8" textLength="17.0" lengthAdjust="spacingAndGlyphs">Gradi</text>
<text x="946.0" y="60.7" font-family="Liberation Sans" font-size="7.5" fill="#b8b8b8" textLength="18.0" lengthAdjust="spacingAndGlyphs">Patter</text>
<text x="969.0" y="60.7" font-family="Liberation Sans" font-size="7.5" fill="#b8b8b8" textLength="17.0" lengthAdjust="spacingAndGlyphs">Histo</text>
<text x="991.0" y="60.7" font-family="Liberation Sans" font-size="7.5" fill="#b8b8b8" textLength="16.0" lengthAdjust="spacingAndGlyphs">Actio</text>
<text x="1014.0" y="60.7" font-family="Liberation Sans" font-size="7.5" fill="#f4f4f4" font-weight="bold" textLength="31.0" lengthAdjust="spacingAndGlyphs">Properties</text>
<text x="920.0" y="83.7" font-family="Liberation Sans" font-size="7.5" fill="#d8d8d8" textLength="26.0" lengthAdjust="spacingAndGlyphs">Document</text>
<text x="910.0" y="105.4" font-family="Liberation Sans" font-size="7.5" fill="#eaeaea" font-weight="bold" textLength="23.0" lengthAdjust="spacingAndGlyphs">Canvas</text>
<text x="927.0" y="122.7" font-family="Liberation Sans" font-size="7.5" fill="#cfcfcf" textLength="6.0" lengthAdjust="spacingAndGlyphs">W</text>
<text x="941.0" y="122.5" font-family="Liberation Sans" font-size="7" fill="#e4e4e4" textLength="24.0" lengthAdjust="spacingAndGlyphs">2232 px</text>
<text x="980.0" y="122.7" font-family="Liberation Sans" font-size="7.5" fill="#bdbdbd" textLength="5.0" lengthAdjust="spacingAndGlyphs">X</text>
<text x="992.0" y="122.5" font-family="Liberation Sans" font-size="7" fill="#686868" textLength="12.0" lengthAdjust="spacingAndGlyphs">0 px</text>
<text x="928.0" y="139.7" font-family="Liberation Sans" font-size="7.5" fill="#cfcfcf" textLength="6.0" lengthAdjust="spacingAndGlyphs">H</text>
<text x="941.0" y="139.5" font-family="Liberation Sans" font-size="7" fill="#e4e4e4" textLength="24.0" lengthAdjust="spacingAndGlyphs">2854 px</text>
<text x="980.0" y="139.7" font-family="Liberation Sans" font-size="7.5" fill="#bdbdbd" textLength="5.0" lengthAdjust="spacingAndGlyphs">Y</text>
<text x="992.0" y="139.5" font-family="Liberation Sans" font-size="7" fill="#686868" textLength="12.0" lengthAdjust="spacingAndGlyphs">0 px</text>
<text x="939.0" y="182.5" font-family="Liberation Sans" font-size="7" fill="#cfcfcf" textLength="73.0" lengthAdjust="spacingAndGlyphs">Resolution: 250 pixels/inch</text>
<text x="918.0" y="200.1" font-family="Liberation Sans" font-size="7" fill="#cfcfcf" textLength="16.0" lengthAdjust="spacingAndGlyphs">Mode</text>
<text x="943.0" y="201.0" font-family="Liberation Sans" font-size="7" fill="#e0e0e0" textLength="27.0" lengthAdjust="spacingAndGlyphs">RGB Color</text>
<text x="943.0" y="218.5" font-family="Liberation Sans" font-size="7" fill="#e0e0e0" textLength="44.0" lengthAdjust="spacingAndGlyphs">16 Bits/Channel</text>
<text x="926.0" y="237.0" font-family="Liberation Sans" font-size="7" fill="#cfcfcf" textLength="8.0" lengthAdjust="spacingAndGlyphs">Fill</text>
<text x="957.0" y="237.0" font-family="Liberation Sans" font-size="7" fill="#e0e0e0" textLength="35.0" lengthAdjust="spacingAndGlyphs">Transparent</text>
<text x="911.0" y="260.5" font-family="Liberation Sans" font-size="7.5" fill="#eaeaea" font-weight="bold" textLength="43.0" lengthAdjust="spacingAndGlyphs">Rulers &amp; Grids</text>
<text x="980.0" y="281.3" font-family="Liberation Sans" font-size="6.5" fill="#e0e0e0" textLength="15.0" lengthAdjust="spacingAndGlyphs">Pixels</text>
<text x="911.0" y="307.7" font-family="Liberation Sans" font-size="7.5" fill="#eaeaea" font-weight="bold" textLength="22.0" lengthAdjust="spacingAndGlyphs">Guides</text>
<text x="911.0" y="354.7" font-family="Liberation Sans" font-size="7.5" fill="#eaeaea" font-weight="bold" textLength="43.0" lengthAdjust="spacingAndGlyphs">Quick Actions</text>
<text x="901.0" y="399.7" font-family="Liberation Sans" font-size="7.5" fill="#f0f0f0" font-weight="bold" textLength="20.0" lengthAdjust="spacingAndGlyphs">Layers</text>
<text x="911.0" y="422.0" font-family="Liberation Sans" font-size="7" fill="#e0e0e0" textLength="14.0" lengthAdjust="spacingAndGlyphs">Kind</text>
<text x="903.0" y="442.0" font-family="Liberation Sans" font-size="7" fill="#6c6c6c" textLength="22.0" lengthAdjust="spacingAndGlyphs">Normal</text>
<text x="983.0" y="442.0" font-family="Liberation Sans" font-size="7" fill="#6c6c6c" textLength="23.0" lengthAdjust="spacingAndGlyphs">Opacity:</text>
<text x="1011.0" y="441.8" font-family="Liberation Sans" font-size="6.5" fill="#6c6c6c" textLength="15.0" lengthAdjust="spacingAndGlyphs">100%</text>
<text x="900.0" y="461.5" font-family="Liberation Sans" font-size="7" fill="#767676" textLength="16.0" lengthAdjust="spacingAndGlyphs">Lock:</text>
<text x="1000.0" y="461.5" font-family="Liberation Sans" font-size="7" fill="#767676" textLength="7.0" lengthAdjust="spacingAndGlyphs">Fill:</text>
<text x="1011.0" y="461.3" font-family="Liberation Sans" font-size="6.5" fill="#6c6c6c" textLength="15.0" lengthAdjust="spacingAndGlyphs">100%</text>
<text x="951.0" y="479.8" font-family="Liberation Sans" font-size="6.5" fill="#e0e0e0" textLength="27.0" lengthAdjust="spacingAndGlyphs">adita text</text>
<text x="942.0" y="507.0" font-family="Liberation Serif" font-size="13" fill="#e2e2e2" textLength="10.0" lengthAdjust="spacingAndGlyphs">T</text>
<text x="963.0" y="503.8" font-family="Liberation Sans" font-size="6.5" fill="#e0e0e0" textLength="20.0" lengthAdjust="spacingAndGlyphs">Layer 2</text>
<text x="959.0" y="532.3" font-family="Liberation Sans" font-size="6.5" fill="#e0e0e0" textLength="20.0" lengthAdjust="spacingAndGlyphs">Layer 3</text>
<text x="942.0" y="563.5" font-family="Liberation Serif" font-size="13" fill="#e2e2e2" textLength="10.0" lengthAdjust="spacingAndGlyphs">T</text>
<text x="963.0" y="560.3" font-family="Liberation Sans" font-size="6.5" fill="#e0e0e0" textLength="83.0" lengthAdjust="spacingAndGlyphs">cilla0000000...&lt;&lt;&lt;&lt;&lt;&lt;&lt;&lt;&lt;0 d</text>
<text x="942.0" y="592.0" font-family="Liberation Serif" font-size="13" fill="#e2e2e2" textLength="10.0" lengthAdjust="spacingAndGlyphs">T</text>
<text x="963.0" y="588.8" font-family="Liberation Sans" font-size="6.5" fill="#e0e0e0" textLength="9.0" lengthAdjust="spacingAndGlyphs">1aa</text>
<text x="942.0" y="620.5" font-family="Liberation Serif" font-size="13" fill="#e2e2e2" textLength="10.0" lengthAdjust="spacingAndGlyphs">T</text>
<text x="963.0" y="617.3" font-family="Liberation Sans" font-size="6.5" fill="#e0e0e0" textLength="9.0" lengthAdjust="spacingAndGlyphs">169</text>
<text x="942.0" y="649.0" font-family="Liberation Serif" font-size="13" fill="#e2e2e2" textLength="10.0" lengthAdjust="spacingAndGlyphs">T</text>
<text x="963.0" y="645.8" font-family="Liberation Sans" font-size="6.5" fill="#e0e0e0" textLength="5.0" lengthAdjust="spacingAndGlyphs">m</text>
<text x="942.0" y="678.0" font-family="Liberation Serif" font-size="13" fill="#e2e2e2" textLength="10.0" lengthAdjust="spacingAndGlyphs">T</text>
<text x="963.0" y="674.8" font-family="Liberation Sans" font-size="6.5" fill="#e0e0e0" textLength="17.0" lengthAdjust="spacingAndGlyphs">1296...</text>
<text x="942.0" y="703.5" font-family="Liberation Serif" font-size="13" fill="#e2e2e2" textLength="10.0" lengthAdjust="spacingAndGlyphs">T</text>
<text x="963.0" y="700.3" font-family="Liberation Sans" font-size="6.5" fill="#e0e0e0" textLength="30.0" lengthAdjust="spacingAndGlyphs">01.01.1990</text>
<text x="78.0" y="31.7" font-family="Liberation Sans" font-size="7.5" fill="#e0e0e0" textLength="33.0" lengthAdjust="spacingAndGlyphs">Auto-Select:</text>
<text x="125.0" y="31.7" font-family="Liberation Sans" font-size="7.5" fill="#e0e0e0" textLength="17.0" lengthAdjust="spacingAndGlyphs">Layer</text>
<text x="175.0" y="31.7" font-family="Liberation Sans" font-size="7.5" fill="#e0e0e0" textLength="70.0" lengthAdjust="spacingAndGlyphs">Show Transform Controls</text>
<text x="448.0" y="31.7" font-family="Liberation Sans" font-size="7.5" fill="#858585" textLength="28.0" lengthAdjust="spacingAndGlyphs">3D Mode:</text>
<text x="30.0" y="718.3" font-family="Liberation Sans" font-size="6.5" fill="#e0e0e0" textLength="20.0" lengthAdjust="spacingAndGlyphs">20.66%</text>
<text x="71.0" y="718.3" font-family="Liberation Sans" font-size="6.5" fill="#d0d0d0" textLength="76.0" lengthAdjust="spacingAndGlyphs">2232 px x 2854 px (250 ppi)</text>
<text x="165.0" y="718.3" font-family="Liberation Sans" font-size="6.5" fill="#aaa" textLength="4.0" lengthAdjust="spacingAndGlyphs">&gt;</text>
</svg>
<svg class="a" style="left:850px;top:655px" width="230" height="50" viewBox="850 655 230 50">
<g fill="none" stroke="#1c1c1c" stroke-width="2.2" stroke-linejoin="miter">
 <path d="M871.5 667.8H858.7V695.6H871.9M858.7 681.6H870.8"/>
 <path d="M878.6 666.7V696.8M893 667L879.5 682.5M883.5 677.5L893.5 696.8"/>
 <ellipse cx="907.5" cy="681.8" rx="10.2" ry="14.2"/>
 <path d="M940.8 670.5A9.8 14.2 0 1 0 942.3 691.5V681.3H936.2"/>
 <path d="M962 667.8H950V695.6H962.2M950 680.6H961.7"/>
 <path d="M966 697L977 666.5L986.5 697M969.8 686H983"/>
</g>
<circle cx="993.3" cy="695.3" r="1.8" fill="#1c1c1c"/>
<g fill="none" stroke="#7b9a22" stroke-width="2.6">
 <ellipse cx="1010.6" cy="681.3" rx="10.8" ry="15"/>
 <path d="M1027.8 697.8V666.2H1035.3A7.9 7.9 0 0 1 1035.3 682H1027.8M1035 682L1044.5 697.8"/>
 <path d="M1066.2 669.5A10 15 0 1 0 1067 692.8V681.4H1059.5"/>
</g>
</svg>
</body></html>
